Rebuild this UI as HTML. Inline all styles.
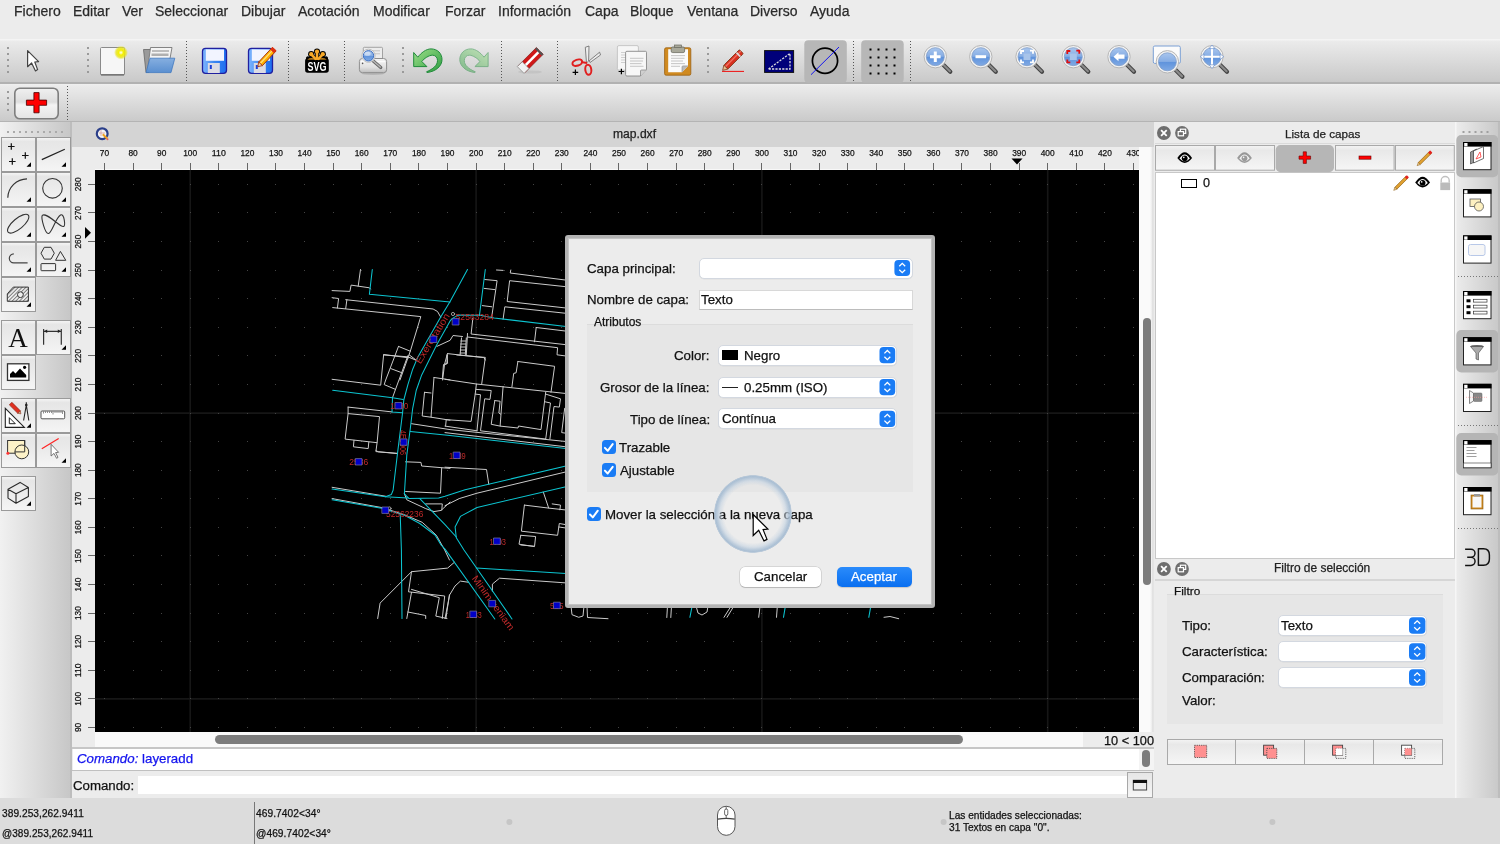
<!DOCTYPE html>
<html><head><meta charset="utf-8">
<style>
*{box-sizing:border-box;margin:0;padding:0}
html,body{width:1500px;height:844px;overflow:hidden;background:#ececec;font-family:"Liberation Sans",sans-serif;color:#222}
.a{position:absolute}
svg,.t{will-change:transform}
.t{-webkit-text-stroke:0.25px}
.t{position:absolute;white-space:nowrap;line-height:1}
.chk{width:14.3px;height:14px;border-radius:3.5px;background:#1a7cf5}
.cmb{background:#fff;border:1px solid #d3d8e0;border-radius:5px;box-shadow:0 .5px .5px rgba(0,0,0,.06)}
#menu .t{font-size:14px;color:#2a2a2a;top:4px}
</style></head><body>
<!-- MENU -->
<div id="menu" class="a" style="left:0;top:0;width:1500px;height:39px;background:#ececec">
<span class="t" style="left:14px">Fichero</span>
<span class="t" style="left:73px">Editar</span>
<span class="t" style="left:122px">Ver</span>
<span class="t" style="left:155px">Seleccionar</span>
<span class="t" style="left:241px">Dibujar</span>
<span class="t" style="left:298px">Acotación</span>
<span class="t" style="left:373px">Modificar</span>
<span class="t" style="left:445px">Forzar</span>
<span class="t" style="left:498px">Información</span>
<span class="t" style="left:585px">Capa</span>
<span class="t" style="left:630px">Bloque</span>
<span class="t" style="left:687px">Ventana</span>
<span class="t" style="left:750px">Diverso</span>
<span class="t" style="left:810px">Ayuda</span>
</div>
<!-- TOOLBAR 1 -->
<div id="tb1" class="a" style="left:0;top:39px;width:1500px;height:45px;background:linear-gradient(#f4f4f4 0,#f4f4f4 1px,#ebebeb 2px,#c9c9c9 43px,#b2b2b2 43px,#b2b2b2 45px)"></div>
<!-- TOOLBAR 2 -->
<div id="tb2" class="a" style="left:0;top:84px;width:1500px;height:38px;background:linear-gradient(#f0f0f0 0,#ebebeb 2px,#cacaca 37px,#b4b4b4 37.5px)"></div>
<!-- LEFT TOOLBOX -->
<div id="tbox" class="a" style="left:0;top:122px;width:70px;height:676px;background:linear-gradient(90deg,#f1f1f1,#c7c7c7)"></div>
<div class="a" style="left:70px;top:122px;width:2px;height:676px;background:#bdbdbd"></div>
<!-- DRAWING HEADER -->
<div class="a" style="left:72px;top:122px;width:1082px;height:25px;background:#d4d4d4"></div>
<div class="t" style="left:613px;top:128px;font-size:12.1px;color:#222">map.dxf</div>
<!-- RULERS -->
<div class="a" style="left:72px;top:147px;width:1067px;height:23px;background:#ececec"></div>
<div class="a" style="left:72px;top:170px;width:23px;height:578px;background:#ececec"></div>
<!-- CANVAS -->
<div id="canvas" class="a" style="left:95px;top:170px;width:1044px;height:562px;background:#000;overflow:hidden"></div>
<!-- V SCROLL -->
<div class="a" style="left:1139px;top:147px;width:15px;height:601px;background:linear-gradient(90deg,#fafafa 0,#fafafa 11px,#ececec 13px,#d8d8d8 14px,#f0f0f0 15px)"></div>
<div class="a" style="left:1143px;top:318px;width:8px;height:267px;border-radius:4px;background:#7c7c7c"></div>
<!-- H SCROLL -->
<div class="a" style="left:95px;top:732px;width:988px;height:15px;background:#f9f9f9"></div>
<div class="a" style="left:215px;top:735px;width:748px;height:9px;border-radius:5px;background:#7c7c7c"></div>
<div class="a" style="left:1083px;top:732px;width:71px;height:15px;background:#ececec"></div>
<div class="t" style="left:1103.5px;top:735px;font-size:12.75px;color:#111">10 &lt; 100</div>
<!-- COMMAND -->
<div class="a" style="left:72px;top:747px;width:1082px;height:2px;background:#c6c6c6"></div>
<div class="a" style="left:73px;top:749px;width:1081px;height:21px;background:#fff"></div>
<div class="a" style="left:72px;top:770px;width:1082px;height:1px;background:#c0c0c0"></div>
<div class="a" style="left:72px;top:771px;width:1082px;height:27px;background:#ececec"></div>
<div class="a" style="left:138px;top:775.7px;width:989px;height:18.5px;background:#fff"></div>
<div class="t" style="left:77px;top:752px;font-size:13.3px;color:#1414ee"><i>Comando:</i> layeradd</div>
<div class="t" style="left:73px;top:779px;font-size:13.25px;color:#111">Comando:</div>
<!-- STATUS -->
<div class="a" style="left:0;top:798px;width:1500px;height:46px;background:#dcdcdc"></div>
<!-- RIGHT PANEL -->
<div id="rp" class="a" style="left:1154px;top:122px;width:301px;height:676px;background:#ececec"></div>
<div class="a" style="left:1155px;top:172px;width:299.7px;height:387px;background:#fff;border:1px solid #c8c8c8"></div>
<!-- DOCK -->
<div id="dock" class="a" style="left:1455px;top:122px;width:45px;height:676px;background:linear-gradient(90deg,#f6f6f6 0,#f6f6f6 1px,#ebebeb 2px,#c9c9c9 43px)"></div>


<!-- STATUS DETAIL -->
<div class="t" style="left:2.4px;top:808.6px;font-size:10.15px;letter-spacing:.06px;color:#111">389.253,262.9411</div>
<div class="t" style="left:2.4px;top:828.6px;font-size:10px;letter-spacing:.06px;color:#111">@389.253,262.9411</div>
<div class="a" style="left:253.5px;top:802px;width:1px;height:42px;background:#777"></div>
<div class="t" style="left:256.3px;top:808.6px;font-size:10.2px;letter-spacing:.06px;color:#111">469.7402&lt;34°</div>
<div class="t" style="left:256.3px;top:828.6px;font-size:10.2px;letter-spacing:.06px;color:#111">@469.7402&lt;34°</div>
<div class="t" style="left:949.2px;top:811.2px;font-size:10.15px;color:#111">Las entidades seleccionadas:</div>
<div class="t" style="left:949.2px;top:822.6px;font-size:10.15px;color:#111">31 Textos en capa "0".</div>
<div class="a" style="left:1127.4px;top:772.4px;width:25.6px;height:25.3px;border:1px solid #a8a8a8;background:linear-gradient(#e6e6e6,#f6f6f6)"></div>
<div class="a" style="left:1139px;top:749px;width:14.5px;height:21px;background:#f4f4f4"></div>
<div class="a" style="left:1142px;top:750.2px;width:8px;height:16.5px;border-radius:4px;background:#7c7c7c"></div>
<svg class="a" style="left:0;top:0" width="1500" height="844" viewBox="0 0 1500 844">
<circle cx="509.4" cy="822" r="3" fill="#c6c6c6"/>
<circle cx="943.6" cy="822.1" r="3" fill="#c6c6c6"/>
<circle cx="1272.4" cy="822.1" r="3" fill="#c6c6c6"/>
<rect x="717.5" y="806.3" width="17.5" height="29" rx="8.7" fill="#fff" stroke="#444" stroke-width=".9"/>
<path d="M717.8,819.2 Q726.2,817.4 734.7,819.2" fill="none" stroke="#444" stroke-width="1.3"/>
<line x1="726.2" y1="806.5" x2="726.2" y2="818.3" stroke="#444" stroke-width=".8"/>
<rect x="724.6" y="809" width="3.2" height="6.5" rx="1.6" fill="#fff" stroke="#444" stroke-width=".8"/>
<rect x="1133.3" y="780.3" width="13.3" height="9.7" fill="#eee" stroke="#444" stroke-width="1"/>
<rect x="1133" y="780" width="14" height="3" fill="#111"/>
</svg>

<!-- RIGHT PANEL DETAIL -->
<div class="a" style="left:1139px;top:122px;width:15px;height:25px;background:#d4d4d4"></div>
<div class="a" style="left:1155px;top:143px;width:300px;height:1px;background:#dadada"></div>
<div class="t" style="left:1284.5px;top:127.5px;font-size:11.7px;color:#222">Lista de capas</div>
<div class="a" style="left:1155px;top:579px;width:300px;height:2px;background:#d6d6d6"></div>
<div class="t" style="left:1274.2px;top:563.3px;font-size:11.95px;color:#222">Filtro de selección</div>
<div class="a" style="left:1167px;top:594px;width:276px;height:130px;background:#e6e6e6;border-top:1px solid #dcdcdc"></div>
<div class="t" style="left:1174.4px;top:585.8px;font-size:11.8px;color:#111">Filtro</div>
<div class="t" style="left:1182px;top:618.5px;font-size:13.3px;color:#111">Tipo:</div>
<div class="t" style="left:1182px;top:644.5px;font-size:13.3px;color:#111">Característica:</div>
<div class="t" style="left:1182px;top:670.5px;font-size:13.3px;color:#111">Comparación:</div>
<div class="t" style="left:1182px;top:693.5px;font-size:13.3px;color:#111">Valor:</div>
<div class="a cmb" style="left:1278px;top:615px;width:149px;height:21px"></div>
<div class="a cmb" style="left:1278px;top:641px;width:149px;height:21px"></div>
<div class="a cmb" style="left:1278px;top:667px;width:149px;height:21px"></div>
<div class="t" style="left:1281px;top:618.5px;font-size:13.3px;color:#111">Texto</div>
<svg class="a" style="left:0;top:0;z-index:2" width="1500" height="844" viewBox="0 0 1500 844">
<defs>
<linearGradient id="lbtn" x1="0" y1="0" x2="0" y2="1"><stop offset="0" stop-color="#f4f4f4"/><stop offset=".2" stop-color="#e8e8e8"/><stop offset="1" stop-color="#f6f6f6"/></linearGradient>
<g id="eye"><path d="M-7.4,0.3 Q-3.5,-5.6 0,-5.6 Q3.5,-5.6 7.4,0.3 Q3.5,5.2 0,5.2 Q-3.5,5.2 -7.4,0.3 Z" fill="#000"/><path d="M-5.2,0.6 Q-2.5,-3.2 0,-3.2 Q2.5,-3.2 5.2,0.6 Q2.5,3.4 0,3.4 Q-2.5,3.4 -5.2,0.6 Z" fill="#fff"/><circle cx="0" cy=".5" r="2.9" fill="#000"/><circle cx="-.9" cy="-.4" r=".8" fill="#fff"/></g>
<g id="pen"><rect x="1.5" y="-1.4" width="16" height="2.8" fill="#e0a030" stroke="#8a5a10" stroke-width=".6"/><rect x="15.5" y="-1.4" width="3" height="2.8" fill="#e52020"/><path d="M1.5,-1.4 L-1.5,0 L1.5,1.4 Z" fill="#f0d090" stroke="#8a5a10" stroke-width=".5"/></g>
<g id="cls"><circle r="6.9" fill="#6e6e6e"/><path d="M-2.8,-2.8 L2.8,2.8 M2.8,-2.8 L-2.8,2.8" stroke="#fff" stroke-width="1.8"/></g>
<g id="flt"><circle r="6.9" fill="#6e6e6e"/><rect x="-1.6" y="-3.8" width="5.3" height="4.2" fill="none" stroke="#fff" stroke-width="1.2"/><rect x="-3.8" y="-1.4" width="5.3" height="4.2" fill="#6e6e6e" stroke="#fff" stroke-width="1.2"/></g>
</defs>
<use href="#cls" x="1163.9" y="133"/><use href="#flt" x="1182" y="133"/>
<use href="#cls" x="1163.9" y="569"/><use href="#flt" x="1182" y="569"/>
<!-- layer buttons -->
<rect x="1155.5" y="145.5" width="59" height="24.7" fill="url(#lbtn)" stroke="#a9a9a9"/>
<rect x="1215.5" y="145.5" width="59" height="24.7" fill="url(#lbtn)" stroke="#a9a9a9"/>
<rect x="1275.7" y="145" width="58.3" height="27.2" rx="5" fill="#b6b6b6"/>
<rect x="1335.5" y="145.5" width="58.6" height="24.7" fill="url(#lbtn)" stroke="#a9a9a9"/>
<rect x="1395.5" y="145.5" width="58.8" height="24.7" fill="url(#lbtn)" stroke="#a9a9a9"/>
<use href="#eye" x="1184.7" y="157.8"/>
<g opacity=".35"><use href="#eye" x="1244.5" y="157.8"/></g>
<path d="M1303.2,151.8 h3.2 v4.2 h4.2 v3.2 h-4.2 v4.2 h-3.2 v-4.2 h-4.2 v-3.2 h4.2 Z" fill="#f00" stroke="#600" stroke-width=".6"/>
<rect x="1359" y="156" width="12" height="3.2" fill="#f00" stroke="#600" stroke-width=".6"/>
<use href="#pen" transform="translate(1418.2,164.6) rotate(-45)"/>
<!-- layer row -->
<rect x="1181.5" y="179.5" width="15" height="8" fill="#fff" stroke="#000" stroke-width="1"/>
<use href="#pen" transform="translate(1394.8,189.3) rotate(-45)"/>
<use href="#eye" x="1422.6" y="182.3"/>
<path d="M1441.2,182.5 v-2 a4,4 0 0 1 8,0 v2" fill="none" stroke="#c0c0c0" stroke-width="1.4"/>
<rect x="1440.3" y="182.5" width="9.8" height="7.6" fill="#bbb"/>
<!-- filter combos steppers -->
<g id="stp"><rect x="1409" y="617.3" width="16.4" height="16.4" rx="4" fill="#1a7cf5"/><path d="M1414.2,623.8 l3,-3 l3,3 M1414.2,627.2 l3,3 l3,-3" fill="none" stroke="#fff" stroke-width="1.3"/></g>
<use href="#stp" y="26"/><use href="#stp" y="52"/>
<!-- filter buttons -->
<rect x="1167.5" y="739.5" width="68" height="25" fill="url(#lbtn)" stroke="#a9a9a9"/>
<rect x="1235.5" y="739.5" width="69" height="25" fill="url(#lbtn)" stroke="#a9a9a9"/>
<rect x="1304.5" y="739.5" width="69" height="25" fill="url(#lbtn)" stroke="#a9a9a9"/>
<rect x="1373.5" y="739.5" width="69" height="25" fill="url(#lbtn)" stroke="#a9a9a9"/>
<rect x="1194.5" y="745.3" width="12.2" height="12.2" fill="#ff9090" stroke="#444" stroke-width=".8" stroke-dasharray="1.2 1"/>
<rect x="1263.6" y="745.2" width="10" height="10" fill="#ff9090" stroke="#444" stroke-width=".9"/>
<rect x="1266.8" y="748.4" width="10" height="10" fill="#ff9090" stroke="#444" stroke-width=".8" stroke-dasharray="1.2 1"/>
<rect x="1332.6" y="745.2" width="10" height="10" fill="#ff9090" stroke="#444" stroke-width=".9"/>
<rect x="1335.8" y="748.4" width="10" height="10" fill="none" stroke="#444" stroke-width=".8" stroke-dasharray="1.2 1"/>
<rect x="1335.8" y="748.4" width="6.8" height="6.8" fill="#fff"/>
<rect x="1401.6" y="745.2" width="10" height="10" fill="#fff" stroke="#444" stroke-width=".9"/>
<rect x="1404.8" y="748.4" width="10" height="10" fill="none" stroke="#444" stroke-width=".8" stroke-dasharray="1.2 1"/>
<rect x="1404.8" y="748.4" width="6.8" height="6.8" fill="#ff9090"/>
<!-- header qcad icon -->
<circle cx="102.2" cy="133.7" r="5.4" fill="#f4f4f4" stroke="#2b3f8a" stroke-width="2.2"/>
<path d="M99,133 h6 M101,130 v6" stroke="#c88" stroke-width=".6"/>
<line x1="102.8" y1="134.2" x2="107.3" y2="138.8" stroke="#f0a020" stroke-width="2"/>
<circle cx="107.5" cy="139.2" r="1" fill="#e06060"/>
</svg>


<!-- DOCK ICONS -->
<div class="t" style="left:1203px;top:176.5px;font-size:12.6px;color:#111">0</div>
<svg class="a" style="left:1455px;top:0;z-index:2" width="45" height="844" viewBox="1455 0 45 844">
<defs>
<g id="win"><rect x="0.5" y="0.5" width="27.5" height="27.2" fill="#fff" stroke="#222" stroke-width="1"/><rect x="0" y="0" width="28.5" height="4.6" fill="#000"/><rect x="1.2" y="1" width="3.3" height="3.3" fill="#fff"/></g>
</defs>
<rect x="1455" y="122" width="1" height="676" fill="#f6f6f6"/>
<g fill="#a0a0a0"><rect x="1462.5" y="131" width="2" height="2"/><rect x="1468.5" y="131" width="2" height="2"/><rect x="1474.5" y="131" width="2" height="2"/><rect x="1480.5" y="131" width="2" height="2"/><rect x="1486.5" y="131" width="2" height="2"/></g>
<rect x="1456.3" y="135" width="42" height="42.2" rx="5" fill="#b5b5b5"/>
<rect x="1456.3" y="330" width="42" height="42.5" rx="5" fill="#b5b5b5"/>
<rect x="1456.3" y="433" width="42" height="42.5" rx="5" fill="#b5b5b5"/>
<g stroke="#777" stroke-width="1" stroke-dasharray="1 2"><line x1="1458" y1="276.5" x2="1499" y2="276.5"/><line x1="1458" y1="425.5" x2="1499" y2="425.5"/><line x1="1458" y1="528.5" x2="1499" y2="528.5"/></g>
<use href="#win" x="1463" y="142"/>
<use href="#win" x="1463" y="189.2"/>
<use href="#win" x="1463" y="235.4"/>
<use href="#win" x="1463" y="291"/>
<use href="#win" x="1463" y="337.2"/>
<use href="#win" x="1463" y="383.8"/>
<use href="#win" x="1463" y="440.1"/>
<use href="#win" x="1463" y="487"/>
<!-- layers icon -->
<path d="M1470.5,152 l6,-3 v12 l-6,3 Z" fill="#999" stroke="#333" stroke-width=".6"/>
<path d="M1473.5,151 l10,-4.5 v12 l-10,4.5 Z" fill="#fff" stroke="#333" stroke-width=".7"/>
<path d="M1476,159 l4,-7 l1,5 Z" fill="none" stroke="#f33" stroke-width=".8"/>
<!-- block icon -->
<rect x="1470" y="199" width="10.5" height="7.5" fill="#fdf0c0" stroke="#555" stroke-width=".8"/>
<circle cx="1479" cy="206.5" r="4.5" fill="#fdf0c0" stroke="#555" stroke-width=".8"/>
<!-- props icon -->
<rect x="1468.5" y="244.5" width="16.5" height="11" rx="2" fill="#f6f6f6" stroke="#b8c8e8" stroke-width="1"/>
<!-- list icon -->
<g fill="#000"><rect x="1466.5" y="299.3" width="4" height="3"/><rect x="1466.5" y="305.2" width="4" height="3"/><rect x="1466.5" y="311.2" width="4" height="3"/></g>
<g fill="#fff" stroke="#333" stroke-width=".7"><rect x="1473.5" y="299.3" width="13.5" height="2.8"/><rect x="1473.5" y="305.2" width="13.5" height="2.8"/><rect x="1473.5" y="311.2" width="13.5" height="2.8"/></g>
<!-- funnel -->
<ellipse cx="1477" cy="346.5" rx="6.5" ry="1.6" fill="#666"/>
<path d="M1470.5,346.5 L1476,353 L1476,359 L1478.5,360 L1478.5,353 L1483.5,346.5 Z" fill="#aaa" stroke="#444" stroke-width=".6"/>
<!-- screw -->
<path d="M1469.5,351.5 l4,2.5 v8 l-4,2.5 Z" transform="translate(0,39)" fill="#f4f4f4" stroke="#555" stroke-width=".7"/>
<rect x="1473.5" y="393" width="8.5" height="8.5" rx="1" fill="#888" stroke="#666" stroke-width=".5"/>
<line x1="1466" y1="397.3" x2="1487" y2="397.3" stroke="#f99" stroke-width=".6" stroke-dasharray="1 1"/>
<!-- command icon -->
<g fill="#888"><rect x="1466.5" y="447" width="10" height=".8"/><rect x="1466.5" y="450" width="8" height=".8"/><rect x="1466.5" y="453" width="10" height=".8"/><rect x="1466.5" y="456" width="10" height=".8"/></g>
<rect x="1463.5" y="463" width="27.5" height="4.7" fill="#fff" stroke="#333" stroke-width=".6"/>
<!-- clipboard -->
<rect x="1471" y="495" width="12" height="14" fill="#d08a20" stroke="#8a5a10" stroke-width=".6"/>
<rect x="1472.5" y="496.5" width="9" height="11" fill="#f8f8f8"/>
<rect x="1474" y="494" width="6" height="2.5" fill="#999"/>
<path d="M1465.1,549.3 H1471 A4,4 0 0 1 1471,557.3 H1467.2 M1471,557.3 A4.05,4.05 0 0 1 1471,565.4 H1465.1 M1478.4,548.7 V565.2 H1483.5 Q1489.4,565.2 1489.4,559 V555 Q1489.4,548.7 1483.5,548.7 Z" fill="none" stroke="#111" stroke-width="1.45" stroke-linejoin="round"/><rect x="1498" y="122" width="2" height="676" fill="#bdbdbd"/>
</svg>

<!-- DIALOG -->
<div id="dlg" class="a" style="z-index:10;left:565px;top:235px;width:370px;height:373px;background:#ececec;border:3px solid #b3b3b3;border-radius:3px;box-shadow:inset 0 0 0 1px #c4c4c4"></div>
<div class="a" style="z-index:11;left:0;top:0;width:1500px;height:844px">
<div class="t" style="left:587px;top:262px;font-size:13.3px;color:#111">Capa principal:</div>
<div class="a cmb" style="left:698.5px;top:257.5px;width:214px;height:21px"></div>
<div class="t" style="left:587px;top:293px;font-size:13.3px;color:#111">Nombre de capa:</div>
<div class="a" style="left:698.5px;top:290px;width:214px;height:19.5px;background:#fff;border:1px solid #d8d8d8;border-bottom-color:#bcbcbc"></div>
<div class="t" style="left:700.5px;top:293px;font-size:13.3px;color:#111">Texto</div>
<div class="a" style="left:586.8px;top:324px;width:326.2px;height:168px;background:#e6e6e6;border-top:1px solid #dcdcdc"></div>
<div class="t" style="left:594.4px;top:316px;font-size:12px;color:#111">Atributos</div>
<div class="t" style="left:673.5px;top:348.5px;font-size:13.3px;color:#111">Color:</div>
<div class="t" style="left:599.8px;top:380.5px;font-size:13.3px;color:#111">Grosor de la línea:</div>
<div class="t" style="left:630px;top:412.5px;font-size:13.3px;color:#111">Tipo de línea:</div>
<div class="a cmb" style="left:718px;top:344.5px;width:179px;height:21px"></div>
<div class="a cmb" style="left:718px;top:376.5px;width:179px;height:21px"></div>
<div class="a cmb" style="left:718px;top:408.3px;width:179px;height:21px"></div>
<div class="a" style="left:722px;top:350.3px;width:16px;height:9.4px;background:#000"></div>
<div class="t" style="left:744px;top:348.5px;font-size:13.3px;color:#111">Negro</div>
<div class="a" style="left:722px;top:386.5px;width:16px;height:1px;background:#222"></div>
<div class="t" style="left:744px;top:380.5px;font-size:13.3px;color:#111">0.25mm (ISO)</div>
<div class="t" style="left:721.5px;top:412px;font-size:13.3px;color:#111">Contínua</div>
<div class="a chk" style="left:601.7px;top:440.3px"></div>
<div class="a chk" style="left:601.7px;top:463px"></div>
<div class="a chk" style="left:586.8px;top:506.9px"></div>
<div class="t" style="left:619.4px;top:441px;font-size:13.3px;color:#111">Trazable</div>
<div class="t" style="left:620px;top:464px;font-size:13.3px;color:#111">Ajustable</div>
<div class="t" style="left:605px;top:508px;font-size:13.3px;color:#111">Mover la selección a la nueva capa</div>
<div class="a" style="left:739.8px;top:566.8px;width:81.3px;height:20.3px;background:#fff;border-radius:5px;box-shadow:0 0 0 .5px rgba(0,0,0,.18),0 1px 1px rgba(0,0,0,.15)"></div>
<div class="t" style="left:753.5px;top:570px;font-size:13.3px;color:#111">Cancelar</div>
<div class="a" style="left:836.8px;top:566.8px;width:75px;height:20.3px;background:linear-gradient(#2a8bfb,#0a6ff0);border-radius:5px;box-shadow:0 1px 1px rgba(0,0,0,.15)"></div>
<div class="t" style="left:851px;top:570px;font-size:13.3px;color:#fff">Aceptar</div>
<svg class="a" style="left:0;top:0" width="1500" height="844" viewBox="0 0 1500 844">
<defs><g id="dstp"><rect x="0" y="0" width="15.7" height="16.2" rx="4" fill="#1a7cf5"/><path d="M4.9,6.4 l2.95,-2.9 l2.95,2.9 M4.9,9.8 l2.95,2.9 l2.95,-2.9" fill="none" stroke="#fff" stroke-width="1.3"/></g>
<g id="tick"><path d="M3.2,7.6 L6,10.5 L11,3.8" fill="none" stroke="#fff" stroke-width="2" stroke-linecap="round" stroke-linejoin="round"/></g></defs>
<use href="#dstp" x="894.4" y="259.9"/>
<use href="#dstp" x="879.5" y="347"/>
<use href="#dstp" x="879.5" y="379"/>
<use href="#dstp" x="879.5" y="410.8"/>
<use href="#tick" x="601.7" y="440.3"/>
<use href="#tick" x="601.7" y="463"/>
<use href="#tick" x="586.8" y="506.9"/>
<radialGradient id="ring" cx="752.9" cy="514" r="39.2" gradientUnits="userSpaceOnUse"><stop offset="0" stop-color="#b0c4d8" stop-opacity="0"/><stop offset=".74" stop-color="#c4d2e0" stop-opacity="0"/><stop offset=".84" stop-color="#c4d3e2" stop-opacity=".55"/><stop offset=".9" stop-color="#b2c5d8" stop-opacity=".8"/><stop offset=".955" stop-color="#a6bcd2" stop-opacity=".95"/><stop offset=".985" stop-color="#a9bed3" stop-opacity=".7"/><stop offset="1" stop-color="#a9bed3" stop-opacity="0"/></radialGradient>
<circle cx="752.9" cy="514" r="39.2" fill="url(#ring)"/>
<path d="M753.2,514.5 L753.2,535.5 L758.7,530.2 L764,540.9 L767,539.4 L763.1,529.6 L767.9,529 Z" fill="#fff" stroke="#000" stroke-width="1.2" stroke-linejoin="miter"/>
</svg>
</div>


<!-- RULERS+GRID -->
<svg class="a" style="left:0;top:0" width="1500" height="844" viewBox="0 0 1500 844">
<defs><clipPath id="rulT"><rect x="95" y="147" width="1044" height="23"/></clipPath><clipPath id="rulL"><rect x="72" y="170" width="23" height="562"/></clipPath><clipPath id="cnv"><rect x="95" y="170" width="1044" height="562"/></clipPath></defs>
<line x1="95" y1="169.5" x2="1139" y2="169.5" stroke="#f8f8f8" stroke-width="1"/>
<g clip-path="url(#rulT)">
<line x1="104.5" y1="163" x2="104.5" y2="170" stroke="#666" stroke-width="1"/>
<text x="104.5" y="156" text-anchor="middle" font-family="Liberation Sans" font-size="9.4" fill="#111" stroke="#111" stroke-width="0.25" textLength="9.3" lengthAdjust="spacingAndGlyphs">70</text>
<line x1="133.5" y1="163" x2="133.5" y2="170" stroke="#666" stroke-width="1"/>
<text x="133.1" y="156" text-anchor="middle" font-family="Liberation Sans" font-size="9.4" fill="#111" stroke="#111" stroke-width="0.25" textLength="9.3" lengthAdjust="spacingAndGlyphs">80</text>
<line x1="161.5" y1="163" x2="161.5" y2="170" stroke="#666" stroke-width="1"/>
<text x="161.7" y="156" text-anchor="middle" font-family="Liberation Sans" font-size="9.4" fill="#111" stroke="#111" stroke-width="0.25" textLength="9.3" lengthAdjust="spacingAndGlyphs">90</text>
<line x1="190.5" y1="163" x2="190.5" y2="170" stroke="#666" stroke-width="1"/>
<text x="190.2" y="156" text-anchor="middle" font-family="Liberation Sans" font-size="9.4" fill="#111" stroke="#111" stroke-width="0.25" textLength="14.0" lengthAdjust="spacingAndGlyphs">100</text>
<line x1="218.5" y1="163" x2="218.5" y2="170" stroke="#666" stroke-width="1"/>
<text x="218.8" y="156" text-anchor="middle" font-family="Liberation Sans" font-size="9.4" fill="#111" stroke="#111" stroke-width="0.25" textLength="14.0" lengthAdjust="spacingAndGlyphs">110</text>
<line x1="247.5" y1="163" x2="247.5" y2="170" stroke="#666" stroke-width="1"/>
<text x="247.4" y="156" text-anchor="middle" font-family="Liberation Sans" font-size="9.4" fill="#111" stroke="#111" stroke-width="0.25" textLength="14.0" lengthAdjust="spacingAndGlyphs">120</text>
<line x1="275.5" y1="163" x2="275.5" y2="170" stroke="#666" stroke-width="1"/>
<text x="276.0" y="156" text-anchor="middle" font-family="Liberation Sans" font-size="9.4" fill="#111" stroke="#111" stroke-width="0.25" textLength="14.0" lengthAdjust="spacingAndGlyphs">130</text>
<line x1="304.5" y1="163" x2="304.5" y2="170" stroke="#666" stroke-width="1"/>
<text x="304.6" y="156" text-anchor="middle" font-family="Liberation Sans" font-size="9.4" fill="#111" stroke="#111" stroke-width="0.25" textLength="14.0" lengthAdjust="spacingAndGlyphs">140</text>
<line x1="333.5" y1="163" x2="333.5" y2="170" stroke="#666" stroke-width="1"/>
<text x="333.2" y="156" text-anchor="middle" font-family="Liberation Sans" font-size="9.4" fill="#111" stroke="#111" stroke-width="0.25" textLength="14.0" lengthAdjust="spacingAndGlyphs">150</text>
<line x1="361.5" y1="163" x2="361.5" y2="170" stroke="#666" stroke-width="1"/>
<text x="361.7" y="156" text-anchor="middle" font-family="Liberation Sans" font-size="9.4" fill="#111" stroke="#111" stroke-width="0.25" textLength="14.0" lengthAdjust="spacingAndGlyphs">160</text>
<line x1="390.5" y1="163" x2="390.5" y2="170" stroke="#666" stroke-width="1"/>
<text x="390.3" y="156" text-anchor="middle" font-family="Liberation Sans" font-size="9.4" fill="#111" stroke="#111" stroke-width="0.25" textLength="14.0" lengthAdjust="spacingAndGlyphs">170</text>
<line x1="418.5" y1="163" x2="418.5" y2="170" stroke="#666" stroke-width="1"/>
<text x="418.9" y="156" text-anchor="middle" font-family="Liberation Sans" font-size="9.4" fill="#111" stroke="#111" stroke-width="0.25" textLength="14.0" lengthAdjust="spacingAndGlyphs">180</text>
<line x1="447.5" y1="163" x2="447.5" y2="170" stroke="#666" stroke-width="1"/>
<text x="447.5" y="156" text-anchor="middle" font-family="Liberation Sans" font-size="9.4" fill="#111" stroke="#111" stroke-width="0.25" textLength="14.0" lengthAdjust="spacingAndGlyphs">190</text>
<line x1="476.5" y1="163" x2="476.5" y2="170" stroke="#666" stroke-width="1"/>
<text x="476.1" y="156" text-anchor="middle" font-family="Liberation Sans" font-size="9.4" fill="#111" stroke="#111" stroke-width="0.25" textLength="14.0" lengthAdjust="spacingAndGlyphs">200</text>
<line x1="504.5" y1="163" x2="504.5" y2="170" stroke="#666" stroke-width="1"/>
<text x="504.7" y="156" text-anchor="middle" font-family="Liberation Sans" font-size="9.4" fill="#111" stroke="#111" stroke-width="0.25" textLength="14.0" lengthAdjust="spacingAndGlyphs">210</text>
<line x1="533.5" y1="163" x2="533.5" y2="170" stroke="#666" stroke-width="1"/>
<text x="533.2" y="156" text-anchor="middle" font-family="Liberation Sans" font-size="9.4" fill="#111" stroke="#111" stroke-width="0.25" textLength="14.0" lengthAdjust="spacingAndGlyphs">220</text>
<line x1="561.5" y1="163" x2="561.5" y2="170" stroke="#666" stroke-width="1"/>
<text x="561.8" y="156" text-anchor="middle" font-family="Liberation Sans" font-size="9.4" fill="#111" stroke="#111" stroke-width="0.25" textLength="14.0" lengthAdjust="spacingAndGlyphs">230</text>
<line x1="590.5" y1="163" x2="590.5" y2="170" stroke="#666" stroke-width="1"/>
<text x="590.4" y="156" text-anchor="middle" font-family="Liberation Sans" font-size="9.4" fill="#111" stroke="#111" stroke-width="0.25" textLength="14.0" lengthAdjust="spacingAndGlyphs">240</text>
<line x1="618.5" y1="163" x2="618.5" y2="170" stroke="#666" stroke-width="1"/>
<text x="619.0" y="156" text-anchor="middle" font-family="Liberation Sans" font-size="9.4" fill="#111" stroke="#111" stroke-width="0.25" textLength="14.0" lengthAdjust="spacingAndGlyphs">250</text>
<line x1="647.5" y1="163" x2="647.5" y2="170" stroke="#666" stroke-width="1"/>
<text x="647.6" y="156" text-anchor="middle" font-family="Liberation Sans" font-size="9.4" fill="#111" stroke="#111" stroke-width="0.25" textLength="14.0" lengthAdjust="spacingAndGlyphs">260</text>
<line x1="676.5" y1="163" x2="676.5" y2="170" stroke="#666" stroke-width="1"/>
<text x="676.2" y="156" text-anchor="middle" font-family="Liberation Sans" font-size="9.4" fill="#111" stroke="#111" stroke-width="0.25" textLength="14.0" lengthAdjust="spacingAndGlyphs">270</text>
<line x1="704.5" y1="163" x2="704.5" y2="170" stroke="#666" stroke-width="1"/>
<text x="704.7" y="156" text-anchor="middle" font-family="Liberation Sans" font-size="9.4" fill="#111" stroke="#111" stroke-width="0.25" textLength="14.0" lengthAdjust="spacingAndGlyphs">280</text>
<line x1="733.5" y1="163" x2="733.5" y2="170" stroke="#666" stroke-width="1"/>
<text x="733.3" y="156" text-anchor="middle" font-family="Liberation Sans" font-size="9.4" fill="#111" stroke="#111" stroke-width="0.25" textLength="14.0" lengthAdjust="spacingAndGlyphs">290</text>
<line x1="761.5" y1="163" x2="761.5" y2="170" stroke="#666" stroke-width="1"/>
<text x="761.9" y="156" text-anchor="middle" font-family="Liberation Sans" font-size="9.4" fill="#111" stroke="#111" stroke-width="0.25" textLength="14.0" lengthAdjust="spacingAndGlyphs">300</text>
<line x1="790.5" y1="163" x2="790.5" y2="170" stroke="#666" stroke-width="1"/>
<text x="790.5" y="156" text-anchor="middle" font-family="Liberation Sans" font-size="9.4" fill="#111" stroke="#111" stroke-width="0.25" textLength="14.0" lengthAdjust="spacingAndGlyphs">310</text>
<line x1="819.5" y1="163" x2="819.5" y2="170" stroke="#666" stroke-width="1"/>
<text x="819.1" y="156" text-anchor="middle" font-family="Liberation Sans" font-size="9.4" fill="#111" stroke="#111" stroke-width="0.25" textLength="14.0" lengthAdjust="spacingAndGlyphs">320</text>
<line x1="847.5" y1="163" x2="847.5" y2="170" stroke="#666" stroke-width="1"/>
<text x="847.7" y="156" text-anchor="middle" font-family="Liberation Sans" font-size="9.4" fill="#111" stroke="#111" stroke-width="0.25" textLength="14.0" lengthAdjust="spacingAndGlyphs">330</text>
<line x1="876.5" y1="163" x2="876.5" y2="170" stroke="#666" stroke-width="1"/>
<text x="876.2" y="156" text-anchor="middle" font-family="Liberation Sans" font-size="9.4" fill="#111" stroke="#111" stroke-width="0.25" textLength="14.0" lengthAdjust="spacingAndGlyphs">340</text>
<line x1="904.5" y1="163" x2="904.5" y2="170" stroke="#666" stroke-width="1"/>
<text x="904.8" y="156" text-anchor="middle" font-family="Liberation Sans" font-size="9.4" fill="#111" stroke="#111" stroke-width="0.25" textLength="14.0" lengthAdjust="spacingAndGlyphs">350</text>
<line x1="933.5" y1="163" x2="933.5" y2="170" stroke="#666" stroke-width="1"/>
<text x="933.4" y="156" text-anchor="middle" font-family="Liberation Sans" font-size="9.4" fill="#111" stroke="#111" stroke-width="0.25" textLength="14.0" lengthAdjust="spacingAndGlyphs">360</text>
<line x1="961.5" y1="163" x2="961.5" y2="170" stroke="#666" stroke-width="1"/>
<text x="962.0" y="156" text-anchor="middle" font-family="Liberation Sans" font-size="9.4" fill="#111" stroke="#111" stroke-width="0.25" textLength="14.0" lengthAdjust="spacingAndGlyphs">370</text>
<line x1="990.5" y1="163" x2="990.5" y2="170" stroke="#666" stroke-width="1"/>
<text x="990.6" y="156" text-anchor="middle" font-family="Liberation Sans" font-size="9.4" fill="#111" stroke="#111" stroke-width="0.25" textLength="14.0" lengthAdjust="spacingAndGlyphs">380</text>
<line x1="1019.5" y1="163" x2="1019.5" y2="170" stroke="#666" stroke-width="1"/>
<text x="1019.2" y="156" text-anchor="middle" font-family="Liberation Sans" font-size="9.4" fill="#111" stroke="#111" stroke-width="0.25" textLength="14.0" lengthAdjust="spacingAndGlyphs">390</text>
<line x1="1047.5" y1="163" x2="1047.5" y2="170" stroke="#666" stroke-width="1"/>
<text x="1047.7" y="156" text-anchor="middle" font-family="Liberation Sans" font-size="9.4" fill="#111" stroke="#111" stroke-width="0.25" textLength="14.0" lengthAdjust="spacingAndGlyphs">400</text>
<line x1="1076.5" y1="163" x2="1076.5" y2="170" stroke="#666" stroke-width="1"/>
<text x="1076.3" y="156" text-anchor="middle" font-family="Liberation Sans" font-size="9.4" fill="#111" stroke="#111" stroke-width="0.25" textLength="14.0" lengthAdjust="spacingAndGlyphs">410</text>
<line x1="1104.5" y1="163" x2="1104.5" y2="170" stroke="#666" stroke-width="1"/>
<text x="1104.9" y="156" text-anchor="middle" font-family="Liberation Sans" font-size="9.4" fill="#111" stroke="#111" stroke-width="0.25" textLength="14.0" lengthAdjust="spacingAndGlyphs">420</text>
<line x1="1133.5" y1="163" x2="1133.5" y2="170" stroke="#666" stroke-width="1"/>
<text x="1133.5" y="156" text-anchor="middle" font-family="Liberation Sans" font-size="9.4" fill="#111" stroke="#111" stroke-width="0.25" textLength="14.0" lengthAdjust="spacingAndGlyphs">430</text>
<path d="M1011.5,158.5 L1022.5,158.5 L1017,164.5 Z" fill="#000"/>
</g>
<g clip-path="url(#rulL)">
<line x1="88" y1="727.5" x2="95" y2="727.5" stroke="#666" stroke-width="1"/>
<text x="0" y="0" transform="translate(81.3,727.5) rotate(-90)" text-anchor="middle" font-family="Liberation Sans" font-size="9.4" fill="#111" stroke="#111" stroke-width="0.25" textLength="9.2" lengthAdjust="spacingAndGlyphs">90</text>
<line x1="88" y1="698.5" x2="95" y2="698.5" stroke="#666" stroke-width="1"/>
<text x="0" y="0" transform="translate(81.3,698.9) rotate(-90)" text-anchor="middle" font-family="Liberation Sans" font-size="9.4" fill="#111" stroke="#111" stroke-width="0.25" textLength="13.8" lengthAdjust="spacingAndGlyphs">100</text>
<line x1="88" y1="670.5" x2="95" y2="670.5" stroke="#666" stroke-width="1"/>
<text x="0" y="0" transform="translate(81.3,670.3) rotate(-90)" text-anchor="middle" font-family="Liberation Sans" font-size="9.4" fill="#111" stroke="#111" stroke-width="0.25" textLength="13.8" lengthAdjust="spacingAndGlyphs">110</text>
<line x1="88" y1="641.5" x2="95" y2="641.5" stroke="#666" stroke-width="1"/>
<text x="0" y="0" transform="translate(81.3,641.7) rotate(-90)" text-anchor="middle" font-family="Liberation Sans" font-size="9.4" fill="#111" stroke="#111" stroke-width="0.25" textLength="13.8" lengthAdjust="spacingAndGlyphs">120</text>
<line x1="88" y1="613.5" x2="95" y2="613.5" stroke="#666" stroke-width="1"/>
<text x="0" y="0" transform="translate(81.3,613.1) rotate(-90)" text-anchor="middle" font-family="Liberation Sans" font-size="9.4" fill="#111" stroke="#111" stroke-width="0.25" textLength="13.8" lengthAdjust="spacingAndGlyphs">130</text>
<line x1="88" y1="584.5" x2="95" y2="584.5" stroke="#666" stroke-width="1"/>
<text x="0" y="0" transform="translate(81.3,584.6) rotate(-90)" text-anchor="middle" font-family="Liberation Sans" font-size="9.4" fill="#111" stroke="#111" stroke-width="0.25" textLength="13.8" lengthAdjust="spacingAndGlyphs">140</text>
<line x1="88" y1="555.5" x2="95" y2="555.5" stroke="#666" stroke-width="1"/>
<text x="0" y="0" transform="translate(81.3,556.0) rotate(-90)" text-anchor="middle" font-family="Liberation Sans" font-size="9.4" fill="#111" stroke="#111" stroke-width="0.25" textLength="13.8" lengthAdjust="spacingAndGlyphs">150</text>
<line x1="88" y1="527.5" x2="95" y2="527.5" stroke="#666" stroke-width="1"/>
<text x="0" y="0" transform="translate(81.3,527.4) rotate(-90)" text-anchor="middle" font-family="Liberation Sans" font-size="9.4" fill="#111" stroke="#111" stroke-width="0.25" textLength="13.8" lengthAdjust="spacingAndGlyphs">160</text>
<line x1="88" y1="498.5" x2="95" y2="498.5" stroke="#666" stroke-width="1"/>
<text x="0" y="0" transform="translate(81.3,498.8) rotate(-90)" text-anchor="middle" font-family="Liberation Sans" font-size="9.4" fill="#111" stroke="#111" stroke-width="0.25" textLength="13.8" lengthAdjust="spacingAndGlyphs">170</text>
<line x1="88" y1="470.5" x2="95" y2="470.5" stroke="#666" stroke-width="1"/>
<text x="0" y="0" transform="translate(81.3,470.2) rotate(-90)" text-anchor="middle" font-family="Liberation Sans" font-size="9.4" fill="#111" stroke="#111" stroke-width="0.25" textLength="13.8" lengthAdjust="spacingAndGlyphs">180</text>
<line x1="88" y1="441.5" x2="95" y2="441.5" stroke="#666" stroke-width="1"/>
<text x="0" y="0" transform="translate(81.3,441.6) rotate(-90)" text-anchor="middle" font-family="Liberation Sans" font-size="9.4" fill="#111" stroke="#111" stroke-width="0.25" textLength="13.8" lengthAdjust="spacingAndGlyphs">190</text>
<line x1="88" y1="413.5" x2="95" y2="413.5" stroke="#666" stroke-width="1"/>
<text x="0" y="0" transform="translate(81.3,413.1) rotate(-90)" text-anchor="middle" font-family="Liberation Sans" font-size="9.4" fill="#111" stroke="#111" stroke-width="0.25" textLength="13.8" lengthAdjust="spacingAndGlyphs">200</text>
<line x1="88" y1="384.5" x2="95" y2="384.5" stroke="#666" stroke-width="1"/>
<text x="0" y="0" transform="translate(81.3,384.5) rotate(-90)" text-anchor="middle" font-family="Liberation Sans" font-size="9.4" fill="#111" stroke="#111" stroke-width="0.25" textLength="13.8" lengthAdjust="spacingAndGlyphs">210</text>
<line x1="88" y1="355.5" x2="95" y2="355.5" stroke="#666" stroke-width="1"/>
<text x="0" y="0" transform="translate(81.3,355.9) rotate(-90)" text-anchor="middle" font-family="Liberation Sans" font-size="9.4" fill="#111" stroke="#111" stroke-width="0.25" textLength="13.8" lengthAdjust="spacingAndGlyphs">220</text>
<line x1="88" y1="327.5" x2="95" y2="327.5" stroke="#666" stroke-width="1"/>
<text x="0" y="0" transform="translate(81.3,327.3) rotate(-90)" text-anchor="middle" font-family="Liberation Sans" font-size="9.4" fill="#111" stroke="#111" stroke-width="0.25" textLength="13.8" lengthAdjust="spacingAndGlyphs">230</text>
<line x1="88" y1="298.5" x2="95" y2="298.5" stroke="#666" stroke-width="1"/>
<text x="0" y="0" transform="translate(81.3,298.7) rotate(-90)" text-anchor="middle" font-family="Liberation Sans" font-size="9.4" fill="#111" stroke="#111" stroke-width="0.25" textLength="13.8" lengthAdjust="spacingAndGlyphs">240</text>
<line x1="88" y1="270.5" x2="95" y2="270.5" stroke="#666" stroke-width="1"/>
<text x="0" y="0" transform="translate(81.3,270.1) rotate(-90)" text-anchor="middle" font-family="Liberation Sans" font-size="9.4" fill="#111" stroke="#111" stroke-width="0.25" textLength="13.8" lengthAdjust="spacingAndGlyphs">250</text>
<line x1="88" y1="241.5" x2="95" y2="241.5" stroke="#666" stroke-width="1"/>
<text x="0" y="0" transform="translate(81.3,241.6) rotate(-90)" text-anchor="middle" font-family="Liberation Sans" font-size="9.4" fill="#111" stroke="#111" stroke-width="0.25" textLength="13.8" lengthAdjust="spacingAndGlyphs">260</text>
<line x1="88" y1="212.5" x2="95" y2="212.5" stroke="#666" stroke-width="1"/>
<text x="0" y="0" transform="translate(81.3,213.0) rotate(-90)" text-anchor="middle" font-family="Liberation Sans" font-size="9.4" fill="#111" stroke="#111" stroke-width="0.25" textLength="13.8" lengthAdjust="spacingAndGlyphs">270</text>
<line x1="88" y1="184.5" x2="95" y2="184.5" stroke="#666" stroke-width="1"/>
<text x="0" y="0" transform="translate(81.3,184.4) rotate(-90)" text-anchor="middle" font-family="Liberation Sans" font-size="9.4" fill="#111" stroke="#111" stroke-width="0.25" textLength="13.8" lengthAdjust="spacingAndGlyphs">280</text>
<path d="M85,226.9 L85,238.7 L91,232.8 Z" fill="#000"/>
</g>
<g clip-path="url(#cnv)">
<line x1="190.2" y1="170" x2="190.2" y2="732" stroke="#161616" stroke-width="1.6"/>
<line x1="476.1" y1="170" x2="476.1" y2="732" stroke="#161616" stroke-width="1.6"/>
<line x1="761.9" y1="170" x2="761.9" y2="732" stroke="#161616" stroke-width="1.6"/>
<line x1="1047.7" y1="170" x2="1047.7" y2="732" stroke="#161616" stroke-width="1.6"/>
<line x1="95" y1="698.9" x2="1139" y2="698.9" stroke="#161616" stroke-width="1.6"/>
<line x1="95" y1="413.1" x2="1139" y2="413.1" stroke="#161616" stroke-width="1.6"/>
<path d="M104,727h1v1h-1zM104,698h1v1h-1zM104,670h1v1h-1zM104,641h1v1h-1zM104,613h1v1h-1zM104,584h1v1h-1zM104,555h1v1h-1zM104,527h1v1h-1zM104,498h1v1h-1zM104,470h1v1h-1zM104,441h1v1h-1zM104,413h1v1h-1zM104,384h1v1h-1zM104,355h1v1h-1zM104,327h1v1h-1zM104,298h1v1h-1zM104,270h1v1h-1zM104,241h1v1h-1zM104,212h1v1h-1zM104,184h1v1h-1zM133,727h1v1h-1zM133,698h1v1h-1zM133,670h1v1h-1zM133,641h1v1h-1zM133,613h1v1h-1zM133,584h1v1h-1zM133,555h1v1h-1zM133,527h1v1h-1zM133,498h1v1h-1zM133,470h1v1h-1zM133,441h1v1h-1zM133,413h1v1h-1zM133,384h1v1h-1zM133,355h1v1h-1zM133,327h1v1h-1zM133,298h1v1h-1zM133,270h1v1h-1zM133,241h1v1h-1zM133,212h1v1h-1zM133,184h1v1h-1zM161,727h1v1h-1zM161,698h1v1h-1zM161,670h1v1h-1zM161,641h1v1h-1zM161,613h1v1h-1zM161,584h1v1h-1zM161,555h1v1h-1zM161,527h1v1h-1zM161,498h1v1h-1zM161,470h1v1h-1zM161,441h1v1h-1zM161,413h1v1h-1zM161,384h1v1h-1zM161,355h1v1h-1zM161,327h1v1h-1zM161,298h1v1h-1zM161,270h1v1h-1zM161,241h1v1h-1zM161,212h1v1h-1zM161,184h1v1h-1zM190,727h1v1h-1zM190,698h1v1h-1zM190,670h1v1h-1zM190,641h1v1h-1zM190,613h1v1h-1zM190,584h1v1h-1zM190,555h1v1h-1zM190,527h1v1h-1zM190,498h1v1h-1zM190,470h1v1h-1zM190,441h1v1h-1zM190,413h1v1h-1zM190,384h1v1h-1zM190,355h1v1h-1zM190,327h1v1h-1zM190,298h1v1h-1zM190,270h1v1h-1zM190,241h1v1h-1zM190,212h1v1h-1zM190,184h1v1h-1zM218,727h1v1h-1zM218,698h1v1h-1zM218,670h1v1h-1zM218,641h1v1h-1zM218,613h1v1h-1zM218,584h1v1h-1zM218,555h1v1h-1zM218,527h1v1h-1zM218,498h1v1h-1zM218,470h1v1h-1zM218,441h1v1h-1zM218,413h1v1h-1zM218,384h1v1h-1zM218,355h1v1h-1zM218,327h1v1h-1zM218,298h1v1h-1zM218,270h1v1h-1zM218,241h1v1h-1zM218,212h1v1h-1zM218,184h1v1h-1zM247,727h1v1h-1zM247,698h1v1h-1zM247,670h1v1h-1zM247,641h1v1h-1zM247,613h1v1h-1zM247,584h1v1h-1zM247,555h1v1h-1zM247,527h1v1h-1zM247,498h1v1h-1zM247,470h1v1h-1zM247,441h1v1h-1zM247,413h1v1h-1zM247,384h1v1h-1zM247,355h1v1h-1zM247,327h1v1h-1zM247,298h1v1h-1zM247,270h1v1h-1zM247,241h1v1h-1zM247,212h1v1h-1zM247,184h1v1h-1zM275,727h1v1h-1zM275,698h1v1h-1zM275,670h1v1h-1zM275,641h1v1h-1zM275,613h1v1h-1zM275,584h1v1h-1zM275,555h1v1h-1zM275,527h1v1h-1zM275,498h1v1h-1zM275,470h1v1h-1zM275,441h1v1h-1zM275,413h1v1h-1zM275,384h1v1h-1zM275,355h1v1h-1zM275,327h1v1h-1zM275,298h1v1h-1zM275,270h1v1h-1zM275,241h1v1h-1zM275,212h1v1h-1zM275,184h1v1h-1zM304,727h1v1h-1zM304,698h1v1h-1zM304,670h1v1h-1zM304,641h1v1h-1zM304,613h1v1h-1zM304,584h1v1h-1zM304,555h1v1h-1zM304,527h1v1h-1zM304,498h1v1h-1zM304,470h1v1h-1zM304,441h1v1h-1zM304,413h1v1h-1zM304,384h1v1h-1zM304,355h1v1h-1zM304,327h1v1h-1zM304,298h1v1h-1zM304,270h1v1h-1zM304,241h1v1h-1zM304,212h1v1h-1zM304,184h1v1h-1zM333,727h1v1h-1zM333,698h1v1h-1zM333,670h1v1h-1zM333,641h1v1h-1zM333,613h1v1h-1zM333,584h1v1h-1zM333,555h1v1h-1zM333,527h1v1h-1zM333,498h1v1h-1zM333,470h1v1h-1zM333,441h1v1h-1zM333,413h1v1h-1zM333,384h1v1h-1zM333,355h1v1h-1zM333,327h1v1h-1zM333,298h1v1h-1zM333,270h1v1h-1zM333,241h1v1h-1zM333,212h1v1h-1zM333,184h1v1h-1zM361,727h1v1h-1zM361,698h1v1h-1zM361,670h1v1h-1zM361,641h1v1h-1zM361,613h1v1h-1zM361,584h1v1h-1zM361,555h1v1h-1zM361,527h1v1h-1zM361,498h1v1h-1zM361,470h1v1h-1zM361,441h1v1h-1zM361,413h1v1h-1zM361,384h1v1h-1zM361,355h1v1h-1zM361,327h1v1h-1zM361,298h1v1h-1zM361,270h1v1h-1zM361,241h1v1h-1zM361,212h1v1h-1zM361,184h1v1h-1zM390,727h1v1h-1zM390,698h1v1h-1zM390,670h1v1h-1zM390,641h1v1h-1zM390,613h1v1h-1zM390,584h1v1h-1zM390,555h1v1h-1zM390,527h1v1h-1zM390,498h1v1h-1zM390,470h1v1h-1zM390,441h1v1h-1zM390,413h1v1h-1zM390,384h1v1h-1zM390,355h1v1h-1zM390,327h1v1h-1zM390,298h1v1h-1zM390,270h1v1h-1zM390,241h1v1h-1zM390,212h1v1h-1zM390,184h1v1h-1zM418,727h1v1h-1zM418,698h1v1h-1zM418,670h1v1h-1zM418,641h1v1h-1zM418,613h1v1h-1zM418,584h1v1h-1zM418,555h1v1h-1zM418,527h1v1h-1zM418,498h1v1h-1zM418,470h1v1h-1zM418,441h1v1h-1zM418,413h1v1h-1zM418,384h1v1h-1zM418,355h1v1h-1zM418,327h1v1h-1zM418,298h1v1h-1zM418,270h1v1h-1zM418,241h1v1h-1zM418,212h1v1h-1zM418,184h1v1h-1zM447,727h1v1h-1zM447,698h1v1h-1zM447,670h1v1h-1zM447,641h1v1h-1zM447,613h1v1h-1zM447,584h1v1h-1zM447,555h1v1h-1zM447,527h1v1h-1zM447,498h1v1h-1zM447,470h1v1h-1zM447,441h1v1h-1zM447,413h1v1h-1zM447,384h1v1h-1zM447,355h1v1h-1zM447,327h1v1h-1zM447,298h1v1h-1zM447,270h1v1h-1zM447,241h1v1h-1zM447,212h1v1h-1zM447,184h1v1h-1zM476,727h1v1h-1zM476,698h1v1h-1zM476,670h1v1h-1zM476,641h1v1h-1zM476,613h1v1h-1zM476,584h1v1h-1zM476,555h1v1h-1zM476,527h1v1h-1zM476,498h1v1h-1zM476,470h1v1h-1zM476,441h1v1h-1zM476,413h1v1h-1zM476,384h1v1h-1zM476,355h1v1h-1zM476,327h1v1h-1zM476,298h1v1h-1zM476,270h1v1h-1zM476,241h1v1h-1zM476,212h1v1h-1zM476,184h1v1h-1zM504,727h1v1h-1zM504,698h1v1h-1zM504,670h1v1h-1zM504,641h1v1h-1zM504,613h1v1h-1zM504,584h1v1h-1zM504,555h1v1h-1zM504,527h1v1h-1zM504,498h1v1h-1zM504,470h1v1h-1zM504,441h1v1h-1zM504,413h1v1h-1zM504,384h1v1h-1zM504,355h1v1h-1zM504,327h1v1h-1zM504,298h1v1h-1zM504,270h1v1h-1zM504,241h1v1h-1zM504,212h1v1h-1zM504,184h1v1h-1zM533,727h1v1h-1zM533,698h1v1h-1zM533,670h1v1h-1zM533,641h1v1h-1zM533,613h1v1h-1zM533,584h1v1h-1zM533,555h1v1h-1zM533,527h1v1h-1zM533,498h1v1h-1zM533,470h1v1h-1zM533,441h1v1h-1zM533,413h1v1h-1zM533,384h1v1h-1zM533,355h1v1h-1zM533,327h1v1h-1zM533,298h1v1h-1zM533,270h1v1h-1zM533,241h1v1h-1zM533,212h1v1h-1zM533,184h1v1h-1zM561,727h1v1h-1zM561,698h1v1h-1zM561,670h1v1h-1zM561,641h1v1h-1zM561,613h1v1h-1zM561,584h1v1h-1zM561,555h1v1h-1zM561,527h1v1h-1zM561,498h1v1h-1zM561,470h1v1h-1zM561,441h1v1h-1zM561,413h1v1h-1zM561,384h1v1h-1zM561,355h1v1h-1zM561,327h1v1h-1zM561,298h1v1h-1zM561,270h1v1h-1zM561,241h1v1h-1zM561,212h1v1h-1zM561,184h1v1h-1zM590,727h1v1h-1zM590,698h1v1h-1zM590,670h1v1h-1zM590,641h1v1h-1zM590,613h1v1h-1zM590,584h1v1h-1zM590,555h1v1h-1zM590,527h1v1h-1zM590,498h1v1h-1zM590,470h1v1h-1zM590,441h1v1h-1zM590,413h1v1h-1zM590,384h1v1h-1zM590,355h1v1h-1zM590,327h1v1h-1zM590,298h1v1h-1zM590,270h1v1h-1zM590,241h1v1h-1zM590,212h1v1h-1zM590,184h1v1h-1zM618,727h1v1h-1zM618,698h1v1h-1zM618,670h1v1h-1zM618,641h1v1h-1zM618,613h1v1h-1zM618,584h1v1h-1zM618,555h1v1h-1zM618,527h1v1h-1zM618,498h1v1h-1zM618,470h1v1h-1zM618,441h1v1h-1zM618,413h1v1h-1zM618,384h1v1h-1zM618,355h1v1h-1zM618,327h1v1h-1zM618,298h1v1h-1zM618,270h1v1h-1zM618,241h1v1h-1zM618,212h1v1h-1zM618,184h1v1h-1zM647,727h1v1h-1zM647,698h1v1h-1zM647,670h1v1h-1zM647,641h1v1h-1zM647,613h1v1h-1zM647,584h1v1h-1zM647,555h1v1h-1zM647,527h1v1h-1zM647,498h1v1h-1zM647,470h1v1h-1zM647,441h1v1h-1zM647,413h1v1h-1zM647,384h1v1h-1zM647,355h1v1h-1zM647,327h1v1h-1zM647,298h1v1h-1zM647,270h1v1h-1zM647,241h1v1h-1zM647,212h1v1h-1zM647,184h1v1h-1zM676,727h1v1h-1zM676,698h1v1h-1zM676,670h1v1h-1zM676,641h1v1h-1zM676,613h1v1h-1zM676,584h1v1h-1zM676,555h1v1h-1zM676,527h1v1h-1zM676,498h1v1h-1zM676,470h1v1h-1zM676,441h1v1h-1zM676,413h1v1h-1zM676,384h1v1h-1zM676,355h1v1h-1zM676,327h1v1h-1zM676,298h1v1h-1zM676,270h1v1h-1zM676,241h1v1h-1zM676,212h1v1h-1zM676,184h1v1h-1zM704,727h1v1h-1zM704,698h1v1h-1zM704,670h1v1h-1zM704,641h1v1h-1zM704,613h1v1h-1zM704,584h1v1h-1zM704,555h1v1h-1zM704,527h1v1h-1zM704,498h1v1h-1zM704,470h1v1h-1zM704,441h1v1h-1zM704,413h1v1h-1zM704,384h1v1h-1zM704,355h1v1h-1zM704,327h1v1h-1zM704,298h1v1h-1zM704,270h1v1h-1zM704,241h1v1h-1zM704,212h1v1h-1zM704,184h1v1h-1zM733,727h1v1h-1zM733,698h1v1h-1zM733,670h1v1h-1zM733,641h1v1h-1zM733,613h1v1h-1zM733,584h1v1h-1zM733,555h1v1h-1zM733,527h1v1h-1zM733,498h1v1h-1zM733,470h1v1h-1zM733,441h1v1h-1zM733,413h1v1h-1zM733,384h1v1h-1zM733,355h1v1h-1zM733,327h1v1h-1zM733,298h1v1h-1zM733,270h1v1h-1zM733,241h1v1h-1zM733,212h1v1h-1zM733,184h1v1h-1zM761,727h1v1h-1zM761,698h1v1h-1zM761,670h1v1h-1zM761,641h1v1h-1zM761,613h1v1h-1zM761,584h1v1h-1zM761,555h1v1h-1zM761,527h1v1h-1zM761,498h1v1h-1zM761,470h1v1h-1zM761,441h1v1h-1zM761,413h1v1h-1zM761,384h1v1h-1zM761,355h1v1h-1zM761,327h1v1h-1zM761,298h1v1h-1zM761,270h1v1h-1zM761,241h1v1h-1zM761,212h1v1h-1zM761,184h1v1h-1zM790,727h1v1h-1zM790,698h1v1h-1zM790,670h1v1h-1zM790,641h1v1h-1zM790,613h1v1h-1zM790,584h1v1h-1zM790,555h1v1h-1zM790,527h1v1h-1zM790,498h1v1h-1zM790,470h1v1h-1zM790,441h1v1h-1zM790,413h1v1h-1zM790,384h1v1h-1zM790,355h1v1h-1zM790,327h1v1h-1zM790,298h1v1h-1zM790,270h1v1h-1zM790,241h1v1h-1zM790,212h1v1h-1zM790,184h1v1h-1zM819,727h1v1h-1zM819,698h1v1h-1zM819,670h1v1h-1zM819,641h1v1h-1zM819,613h1v1h-1zM819,584h1v1h-1zM819,555h1v1h-1zM819,527h1v1h-1zM819,498h1v1h-1zM819,470h1v1h-1zM819,441h1v1h-1zM819,413h1v1h-1zM819,384h1v1h-1zM819,355h1v1h-1zM819,327h1v1h-1zM819,298h1v1h-1zM819,270h1v1h-1zM819,241h1v1h-1zM819,212h1v1h-1zM819,184h1v1h-1zM847,727h1v1h-1zM847,698h1v1h-1zM847,670h1v1h-1zM847,641h1v1h-1zM847,613h1v1h-1zM847,584h1v1h-1zM847,555h1v1h-1zM847,527h1v1h-1zM847,498h1v1h-1zM847,470h1v1h-1zM847,441h1v1h-1zM847,413h1v1h-1zM847,384h1v1h-1zM847,355h1v1h-1zM847,327h1v1h-1zM847,298h1v1h-1zM847,270h1v1h-1zM847,241h1v1h-1zM847,212h1v1h-1zM847,184h1v1h-1zM876,727h1v1h-1zM876,698h1v1h-1zM876,670h1v1h-1zM876,641h1v1h-1zM876,613h1v1h-1zM876,584h1v1h-1zM876,555h1v1h-1zM876,527h1v1h-1zM876,498h1v1h-1zM876,470h1v1h-1zM876,441h1v1h-1zM876,413h1v1h-1zM876,384h1v1h-1zM876,355h1v1h-1zM876,327h1v1h-1zM876,298h1v1h-1zM876,270h1v1h-1zM876,241h1v1h-1zM876,212h1v1h-1zM876,184h1v1h-1zM904,727h1v1h-1zM904,698h1v1h-1zM904,670h1v1h-1zM904,641h1v1h-1zM904,613h1v1h-1zM904,584h1v1h-1zM904,555h1v1h-1zM904,527h1v1h-1zM904,498h1v1h-1zM904,470h1v1h-1zM904,441h1v1h-1zM904,413h1v1h-1zM904,384h1v1h-1zM904,355h1v1h-1zM904,327h1v1h-1zM904,298h1v1h-1zM904,270h1v1h-1zM904,241h1v1h-1zM904,212h1v1h-1zM904,184h1v1h-1zM933,727h1v1h-1zM933,698h1v1h-1zM933,670h1v1h-1zM933,641h1v1h-1zM933,613h1v1h-1zM933,584h1v1h-1zM933,555h1v1h-1zM933,527h1v1h-1zM933,498h1v1h-1zM933,470h1v1h-1zM933,441h1v1h-1zM933,413h1v1h-1zM933,384h1v1h-1zM933,355h1v1h-1zM933,327h1v1h-1zM933,298h1v1h-1zM933,270h1v1h-1zM933,241h1v1h-1zM933,212h1v1h-1zM933,184h1v1h-1zM961,727h1v1h-1zM961,698h1v1h-1zM961,670h1v1h-1zM961,641h1v1h-1zM961,613h1v1h-1zM961,584h1v1h-1zM961,555h1v1h-1zM961,527h1v1h-1zM961,498h1v1h-1zM961,470h1v1h-1zM961,441h1v1h-1zM961,413h1v1h-1zM961,384h1v1h-1zM961,355h1v1h-1zM961,327h1v1h-1zM961,298h1v1h-1zM961,270h1v1h-1zM961,241h1v1h-1zM961,212h1v1h-1zM961,184h1v1h-1zM990,727h1v1h-1zM990,698h1v1h-1zM990,670h1v1h-1zM990,641h1v1h-1zM990,613h1v1h-1zM990,584h1v1h-1zM990,555h1v1h-1zM990,527h1v1h-1zM990,498h1v1h-1zM990,470h1v1h-1zM990,441h1v1h-1zM990,413h1v1h-1zM990,384h1v1h-1zM990,355h1v1h-1zM990,327h1v1h-1zM990,298h1v1h-1zM990,270h1v1h-1zM990,241h1v1h-1zM990,212h1v1h-1zM990,184h1v1h-1zM1019,727h1v1h-1zM1019,698h1v1h-1zM1019,670h1v1h-1zM1019,641h1v1h-1zM1019,613h1v1h-1zM1019,584h1v1h-1zM1019,555h1v1h-1zM1019,527h1v1h-1zM1019,498h1v1h-1zM1019,470h1v1h-1zM1019,441h1v1h-1zM1019,413h1v1h-1zM1019,384h1v1h-1zM1019,355h1v1h-1zM1019,327h1v1h-1zM1019,298h1v1h-1zM1019,270h1v1h-1zM1019,241h1v1h-1zM1019,212h1v1h-1zM1019,184h1v1h-1zM1047,727h1v1h-1zM1047,698h1v1h-1zM1047,670h1v1h-1zM1047,641h1v1h-1zM1047,613h1v1h-1zM1047,584h1v1h-1zM1047,555h1v1h-1zM1047,527h1v1h-1zM1047,498h1v1h-1zM1047,470h1v1h-1zM1047,441h1v1h-1zM1047,413h1v1h-1zM1047,384h1v1h-1zM1047,355h1v1h-1zM1047,327h1v1h-1zM1047,298h1v1h-1zM1047,270h1v1h-1zM1047,241h1v1h-1zM1047,212h1v1h-1zM1047,184h1v1h-1zM1076,727h1v1h-1zM1076,698h1v1h-1zM1076,670h1v1h-1zM1076,641h1v1h-1zM1076,613h1v1h-1zM1076,584h1v1h-1zM1076,555h1v1h-1zM1076,527h1v1h-1zM1076,498h1v1h-1zM1076,470h1v1h-1zM1076,441h1v1h-1zM1076,413h1v1h-1zM1076,384h1v1h-1zM1076,355h1v1h-1zM1076,327h1v1h-1zM1076,298h1v1h-1zM1076,270h1v1h-1zM1076,241h1v1h-1zM1076,212h1v1h-1zM1076,184h1v1h-1zM1104,727h1v1h-1zM1104,698h1v1h-1zM1104,670h1v1h-1zM1104,641h1v1h-1zM1104,613h1v1h-1zM1104,584h1v1h-1zM1104,555h1v1h-1zM1104,527h1v1h-1zM1104,498h1v1h-1zM1104,470h1v1h-1zM1104,441h1v1h-1zM1104,413h1v1h-1zM1104,384h1v1h-1zM1104,355h1v1h-1zM1104,327h1v1h-1zM1104,298h1v1h-1zM1104,270h1v1h-1zM1104,241h1v1h-1zM1104,212h1v1h-1zM1104,184h1v1h-1zM1133,727h1v1h-1zM1133,698h1v1h-1zM1133,670h1v1h-1zM1133,641h1v1h-1zM1133,613h1v1h-1zM1133,584h1v1h-1zM1133,555h1v1h-1zM1133,527h1v1h-1zM1133,498h1v1h-1zM1133,470h1v1h-1zM1133,441h1v1h-1zM1133,413h1v1h-1zM1133,384h1v1h-1zM1133,355h1v1h-1zM1133,327h1v1h-1zM1133,298h1v1h-1zM1133,270h1v1h-1zM1133,241h1v1h-1zM1133,212h1v1h-1zM1133,184h1v1h-1z" fill="#444"/>
</g>
</svg>
<!-- DRAWING -->
<svg class="a" style="left:0;top:0" width="1500" height="844" viewBox="0 0 1500 844"><g clip-path="url(#cnv)" fill="none" stroke-linejoin="round" stroke-linecap="round">
<g stroke="#cacaca" stroke-width="1"><polyline points="332.1,290.6 349.9,291.4 351.1,285.1 369.4,287.8 370.5,289.0"/><polyline points="358.2,286.1 360.5,269.5"/><polyline points="332.1,297.7 338.6,298.5 337.4,308.0"/><polyline points="332.7,307.6 389.0,313.3 420.8,316.6 410.3,351.2 400.0,380.0"/><polyline points="345.7,299.7 433.1,309.0 437.5,311.5 440.7,317.1"/><polyline points="346.9,299.7 345.7,308.6"/><polyline points="398.5,346.4 410.3,351.2"/><polyline points="383.8,354.5 408.4,357.8"/><polyline points="398.5,346.4 385.7,380.0 384.2,384.6 395.5,389.4 407.9,355.6"/><polyline points="409.4,355.0 417.0,360.7"/><polyline points="390.8,368.6 402.0,372.8"/><polyline points="383.6,355.0 407.9,356.8 416.2,360.3"/><polyline points="332.1,379.3 380.7,385.2 383.6,355.0"/><polyline points="392.5,397.7 395.5,389.4"/><polyline points="436.9,346.4 450.1,340.3 453.0,335.5 462.5,336.5"/><polyline points="461.5,337.9 460.1,355.0"/><polyline points="466.3,337.9 465.3,355.0"/><polyline points="460.8,341.0 465.8,341.0"/><polyline points="460.6,344.0 465.6,344.0"/><polyline points="460.4,347.0 465.4,347.0"/><polyline points="460.3,350.0 465.3,350.0"/><polyline points="460.2,353.0 465.2,353.0"/><polyline points="484.7,279.5 497.1,280.7 491.8,316.3"/><polyline points="484.1,288.4 494.8,289.6"/><polyline points="482.3,305.6 491.8,306.8"/><polyline points="496.5,270.0 503.1,270.4"/><polyline points="510.8,270.0 510.2,273.0 565.9,280.1"/><polyline points="565.9,286.7 509.6,280.7 507.2,301.5 565.9,308.0"/><polyline points="565.9,313.3 504.8,306.8 503.1,319.2"/><polyline points="472.9,318.0 471.1,334.0 565.9,344.7"/><polyline points="536.2,327.5 565.9,331.1"/><polyline points="536.2,327.5 534.5,341.8"/><polyline points="467.5,337.0 557.6,347.7 557.0,354.8 565.9,356.0"/><polyline points="467.5,333.5 466.3,354.8"/><polyline points="447.4,353.6 484.1,357.7 485.3,360.0"/><polyline points="447.3,354.0 444.5,364.5 442.6,380.0"/><polyline points="348.1,407.1 392.0,411.9"/><polyline points="348.1,407.1 348.1,413.6 379.5,416.6 377.1,442.7 345.1,439.1 348.1,413.6"/><polyline points="354.0,440.3 353.4,446.8 368.2,448.6 368.8,442.1"/><polyline points="377.1,442.7 375.9,451.6 397.3,453.3"/><polyline points="447.0,355.0 447.6,363.3 443.5,364.5 442.3,378.7 450.0,379.9"/><polyline points="434.0,377.5 442.3,378.7"/><polyline points="434.0,377.5 431.0,417.2 450.0,420.2"/><polyline points="424.5,392.3 422.2,416.0 431.0,417.2"/><polyline points="424.5,392.3 431.0,393.0"/><polyline points="411.5,423.7 450.0,429.6 565.9,441.5"/><polyline points="445.0,379.3 476.4,384.0 565.9,393.5"/><polyline points="456.8,355.0 485.3,357.4 481.7,384.0"/><polyline points="445.0,364.5 446.8,363.9 447.4,355.0"/><polyline points="517.9,361.5 554.6,366.3 551.0,392.3"/><polyline points="517.9,361.5 516.1,372.8 513.7,373.4 511.9,387.0"/><polyline points="503.1,386.4 500.1,426.1 518.0,428.0 518.5,426.0 541.0,429.6 545.7,392.3"/><polyline points="476.4,384.0 475.2,394.1 471.1,421.4 445.0,419.6"/><polyline points="446.2,420.0 445.6,426.0"/><polyline points="476.4,389.4 491.2,390.5 490.0,399.4 484.7,398.8 480.5,430.8 545.7,439.1"/><polyline points="475.2,394.1 480.5,394.7 477.0,430.8"/><polyline points="445.0,426.1 477.0,430.8"/><polyline points="494.8,400.6 500.1,401.2 498.9,413.0 500.7,414.2"/><polyline points="494.8,400.6 491.2,424.3 500.1,426.1"/><polyline points="545.7,394.1 560.5,398.8 559.3,407.1 554.0,406.5 549.9,439.1"/><polyline points="545.1,401.8 550.5,403.0 545.7,439.1"/><polyline points="445.0,432.6 565.9,446.8"/><polyline points="564.7,408.3 561.7,432.6 565.9,433.2"/><polyline points="332.1,487.3 385.4,496.2"/><polyline points="332.1,498.6 383.0,507.8"/><polyline points="389.0,509.8 405.0,515.0 422.2,522.3 436.4,535.3 444.7,550.0 449.5,560.0"/><polyline points="376.0,450.6 378.3,451.8 397.3,453.6"/><polyline points="405.6,461.8 421.0,462.4 421.6,466.0 450.0,468.4"/><polyline points="441.7,467.8 440.5,493.2 405.6,491.5"/><polyline points="404.4,493.8 406.8,499.8 425.7,508.6 434.0,511.6 441.1,510.4 450.0,502.1"/><polyline points="425.7,503.9 442.3,503.9 441.8,510.0"/><polyline points="445.0,505.7 459.2,498.6 477.0,493.2 565.9,471.9"/><polyline points="445.0,467.2 486.5,469.5 488.8,484.4"/><polyline points="524.4,505.1 548.7,508.1 565.9,510.0"/><polyline points="524.4,505.1 521.4,531.2 557.6,535.3 559.3,523.5 565.9,524.7"/><polyline points="559.0,527.0 565.9,528.0"/><polyline points="543.3,492.1 548.7,508.1"/><polyline points="552.2,503.9 560.5,505.1 559.9,509.8"/><polyline points="520.8,535.3 535.6,536.5 534.5,546.6 519.0,544.2 520.8,535.3"/><polyline points="377.7,618.5 380.1,603.1 411.5,571.7 447.6,568.1 454.5,562.2"/><polyline points="411.5,571.7 408.5,591.8 444.7,596.0 442.3,618.5"/><polyline points="411.5,589.4 439.3,597.7 435.8,616.1 447.0,618.5"/><polyline points="411.5,592.4 406.8,618.5"/><polyline points="407.9,612.0 425.7,615.5 425.7,618.5"/><polyline points="449.4,594.8 445.9,618.5"/><polyline points="445.0,618.5 449.7,594.8 455.0,586.0 460.4,581.1 468.7,582.3"/><polyline points="492.4,591.2 492.4,584.1 499.5,578.2 565.9,582.9"/><polyline points="520.8,545.0 533.9,546.2"/><polyline points="571.0,606.0 572.0,614.7 578.7,617.3 583.0,616.0 584.0,606.0"/><polyline points="587.0,606.0 587.5,617.5 608.0,618.7"/><polyline points="667.5,606.0 666.8,617.5"/><polyline points="671.5,606.0 670.8,617.5"/><polyline points="696.0,606.0 698.0,613.0 702.0,615.0 707.0,612.0 708.0,606.0"/><polyline points="730.7,606.7 724.0,617.3"/><polyline points="733.5,606.7 727.0,617.3"/><polyline points="760.0,606.7 758.7,617.3"/><polyline points="777.3,606.7 776.5,617.3"/><polyline points="884.0,617.3 890.0,616.5 898.7,618.7"/></g>
<g stroke="#0cc4d0" stroke-width="1.05"><polyline points="372.3,269.5 369.4,294.2 450.1,302.0"/><polyline points="467.5,269.5 450.1,301.4 440.7,317.1 417.9,356.9 412.7,369.2 407.9,384.6 403.8,400.0 402.6,412.5 397.3,455.0 393.1,490.3 391.4,494.4 385.4,496.8"/><polyline points="565.9,326.6 494.2,318.0 480.0,315.2 458.0,315.1 452.1,318.6 450.1,320.9 436.9,344.5 421.7,374.9 416.2,390.5 412.7,408.3 410.3,428.5 406.8,455.0 404.4,493.8 409.1,498.6 438.7,498.0 445.0,496.2 465.1,489.7 565.9,466.0"/><polyline points="485.3,269.5 479.4,315.7"/><polyline points="332.7,390.3 392.5,397.7 403.2,399.4"/><polyline points="392.5,397.7 392.0,411.9 402.6,412.8"/><polyline points="410.3,431.4 450.0,435.6 565.9,448.6"/><polyline points="332.1,489.1 385.4,496.8 407.9,498.0"/><polyline points="332.1,499.8 383.0,508.6"/><polyline points="389.0,510.4 405.0,515.5 419.8,523.5 435.0,535.0 441.1,545.0 445.0,549.1 494.8,619.0"/><polyline points="400.2,514.0 401.4,550.0 402.0,618.5"/><polyline points="419.8,498.6 445.0,524.6 456.3,537.0"/><polyline points="565.9,486.7 477.0,507.5 460.4,516.4 455.1,527.0 456.3,537.7 464.0,550.0 512.0,619.0"/><polyline points="476.4,568.1 565.9,573.4"/><polyline points="692.0,606.7 689.9,617.3"/><polyline points="785.3,606.7 783.5,617.3"/><polyline points="870.7,606.7 868.8,617.3"/></g>
<circle cx="453" cy="314" r="1.6" stroke="#bbb" stroke-width=".8"/>
<circle cx="389.5" cy="508.5" r="1.6" stroke="#bbb" stroke-width=".8"/>
<g fill="#c02a2a" font-family="Liberation Sans" stroke="none">
<text x="0" y="0" transform="translate(420.5,364.5) rotate(-58.8)" font-size="9.6" textLength="57" lengthAdjust="spacingAndGlyphs">Exercitation</text>
<text x="0" y="0" transform="translate(455.6,320.2) rotate(0)" font-size="8.9" textLength="38.2" lengthAdjust="spacingAndGlyphs">52563284</text>
<text x="0" y="0" transform="translate(390.2,409.4) rotate(0)" font-size="8.9" textLength="18" lengthAdjust="spacingAndGlyphs">1580</text>
<text x="0" y="0" transform="translate(400,430) rotate(90)" font-size="8.9" textLength="25" lengthAdjust="spacingAndGlyphs">4E3906</text>
<text x="0" y="0" transform="translate(349.3,465) rotate(0)" font-size="8.9" textLength="19" lengthAdjust="spacingAndGlyphs">2586</text>
<text x="0" y="0" transform="translate(386,517.3) rotate(0)" font-size="8.9" textLength="37.3" lengthAdjust="spacingAndGlyphs">52562236</text>
<text x="0" y="0" transform="translate(449.1,459.1) rotate(0)" font-size="8.9" textLength="16.6" lengthAdjust="spacingAndGlyphs">1589</text>
<text x="0" y="0" transform="translate(489.4,545) rotate(0)" font-size="8.9" textLength="16.6" lengthAdjust="spacingAndGlyphs">1703</text>
<text x="0" y="0" transform="translate(465.7,617.5) rotate(0)" font-size="8.9" textLength="16" lengthAdjust="spacingAndGlyphs">1883</text>
<text x="0" y="0" transform="translate(549.9,609.2) rotate(0)" font-size="8.9" textLength="13.6" lengthAdjust="spacingAndGlyphs">555</text>
<text x="0" y="0" transform="translate(471.5,578.5) rotate(54)" font-size="9.6" textLength="65" lengthAdjust="spacingAndGlyphs">Minim veniam</text>
</g>
<g fill="#0000c8" stroke="#7a7aa8" stroke-width=".7"><rect x="430.4" y="336.1" width="6.4" height="6.4"/><rect x="452.6" y="318.6" width="6.4" height="6.4"/><rect x="395.3" y="402.5" width="6.4" height="6.4"/><rect x="400.6" y="438.9" width="6.4" height="6.4"/><rect x="355.6" y="458.6" width="6.4" height="6.4"/><rect x="382.2" y="507.0" width="6.4" height="6.4"/><rect x="453.6" y="452.1" width="6.4" height="6.4"/><rect x="493.9" y="538.0" width="6.4" height="6.4"/><rect x="489.2" y="600.4" width="6.4" height="6.4"/><rect x="470.2" y="611.1" width="6.4" height="6.4"/><rect x="553.8" y="602.2" width="6.4" height="6.4"/></g>
</g></svg>
<!-- /DRAWING -->
<!-- TOOLBAR ICONS -->
<svg class="a" style="left:0;top:0" width="1500" height="122" viewBox="0 0 1500 122">
<defs>
<radialGradient id="glow"><stop offset="0" stop-color="#fff"/><stop offset=".35" stop-color="#f4f000"/><stop offset=".7" stop-color="#e8e41a" stop-opacity=".8"/><stop offset="1" stop-color="#e8e41a" stop-opacity="0"/></radialGradient>
<linearGradient id="grn" x1="0" y1="0" x2="1" y2="1"><stop offset="0" stop-color="#9ee08a"/><stop offset="1" stop-color="#2c9c40"/></linearGradient>
<linearGradient id="lens" x1="0" y1="0" x2="0" y2="1"><stop offset="0" stop-color="#a9c6ee"/><stop offset=".48" stop-color="#86ade4"/><stop offset=".52" stop-color="#5f93dc"/><stop offset="1" stop-color="#7fa9e4"/></linearGradient>
<linearGradient id="fold" x1="0" y1="0" x2="0" y2="1"><stop offset="0" stop-color="#86afe0"/><stop offset="1" stop-color="#5a8fd0"/></linearGradient>
<linearGradient id="flop" x1="0" y1="0" x2="1" y2="0"><stop offset="0" stop-color="#7fb6ff"/><stop offset=".5" stop-color="#3b86f0"/><stop offset="1" stop-color="#1e6ef0"/></linearGradient>
<g id="floppy">
<rect x="202.5" y="48.3" width="24" height="25" rx="3" fill="url(#flop)" stroke="#2020a0" stroke-width="1.3"/>
<rect x="205.8" y="49.4" width="18.2" height="11.4" fill="#f2f4ff"/>
<rect x="207.8" y="63" width="12" height="10" fill="#dcdce4"/>
<rect x="209.8" y="65" width="2" height="4" fill="#1b3fd8"/>
</g>
<g id="zlens">
<line x1="6" y1="6" x2="15" y2="15" stroke="#444" stroke-width="4.2" stroke-linecap="round"/>
<line x1="6" y1="6" x2="14.6" y2="14.6" stroke="#8a8a8a" stroke-width="2.2" stroke-linecap="round"/>
<circle cx="0" cy="0" r="11.2" fill="#f2f2f2" stroke="#b4b4b4" stroke-width="1"/>
<circle cx="0" cy="0" r="9" fill="url(#lens)" stroke="#7d9cc8" stroke-width=".8"/>
</g>
</defs>
<!-- handles -->
<g fill="#9a9a9a">
<rect x="7" y="47" width="2" height="2"/><rect x="7" y="53" width="2" height="2"/><rect x="7" y="59" width="2" height="2"/><rect x="7" y="65" width="2" height="2"/><rect x="7" y="71" width="2" height="2"/>
<rect x="87" y="47" width="2" height="2"/><rect x="87" y="53" width="2" height="2"/><rect x="87" y="59" width="2" height="2"/><rect x="87" y="65" width="2" height="2"/><rect x="87" y="71" width="2" height="2"/>
<rect x="402" y="47" width="2" height="2"/><rect x="402" y="53" width="2" height="2"/><rect x="402" y="59" width="2" height="2"/><rect x="402" y="65" width="2" height="2"/><rect x="402" y="71" width="2" height="2"/>
<rect x="707" y="47" width="2" height="2"/><rect x="707" y="53" width="2" height="2"/><rect x="707" y="59" width="2" height="2"/><rect x="707" y="65" width="2" height="2"/><rect x="707" y="71" width="2" height="2"/>
<rect x="7" y="91" width="2" height="2"/><rect x="7" y="97" width="2" height="2"/><rect x="7" y="103" width="2" height="2"/><rect x="7" y="109" width="2" height="2"/>
</g>
<!-- separators -->
<g stroke="#555" stroke-width="1" stroke-dasharray="1 2">
<line x1="186.5" y1="41" x2="186.5" y2="82"/>
<line x1="288.5" y1="41" x2="288.5" y2="82"/>
<line x1="344.5" y1="41" x2="344.5" y2="82"/>
<line x1="501.5" y1="41" x2="501.5" y2="82"/>
<line x1="557.5" y1="41" x2="557.5" y2="82"/>
<line x1="853.5" y1="41" x2="853.5" y2="82"/>
<line x1="910.5" y1="41" x2="910.5" y2="82"/>
<line x1="67.5" y1="86" x2="67.5" y2="121"/>
</g>
<!-- cursor -->
<path d="M27.6,50.6 L27.6,66.7 L31.6,63 L35.5,70.9 L37.6,69.6 L34.8,62 L38.6,61.6 Z" fill="#fff" stroke="#444" stroke-width="1.2" stroke-linejoin="round"/>
<!-- new -->
<rect x="100.5" y="47.5" width="24" height="27.5" rx="1" fill="#f6f6f6" stroke="#8a8a8a" stroke-width="1"/>
<rect x="101" y="74" width="23" height="1.5" fill="#777"/>
<circle cx="121" cy="52.6" r="7" fill="url(#glow)"/>
<!-- open -->
<path d="M143.5,49.5 L151,49.5 L149,72.5 L146,72.5 Z" fill="#9a9a9a" stroke="#666" stroke-width=".8"/>
<path d="M150.5,47.5 L172,47.5 L170,58.5 L147.5,70 Z" fill="#f4f4f4" stroke="#777" stroke-width=".9"/>
<rect x="152" y="50" width="17" height="2" fill="#bdbdbd"/><rect x="151.5" y="53.5" width="17" height="2.5" fill="#b0b0b0"/>
<path d="M150,58.2 L174.8,58.2 L171,72.6 L146,72.6 Z" fill="url(#fold)" stroke="#3f77c0" stroke-width=".8"/>
<!-- save -->
<use href="#floppy"/>
<use href="#floppy" x="46"/>
<g transform="translate(258.5,66) rotate(-47)">
<rect x="3" y="-2.6" width="20" height="5.2" fill="#ffb000" stroke="#a03010" stroke-width=".9"/>
<rect x="3" y="-1" width="20" height="1.2" fill="#ffe080"/>
<path d="M3,-2.6 L-1,0 L3,2.6 Z" fill="#f0d8a0" stroke="#a03010" stroke-width=".8"/>
<rect x="20" y="-2.6" width="3.5" height="5.2" fill="#e03010"/>
</g>
<!-- svg -->
<g stroke="#000" stroke-width="4.2" stroke-linecap="round"><line x1="317" y1="51.8" x2="317" y2="59"/><line x1="311.3" y1="54.4" x2="315" y2="59"/><line x1="322.7" y1="54.4" x2="319" y2="59"/><line x1="308" y1="58.4" x2="312" y2="59.5"/><line x1="326" y1="58.4" x2="322" y2="59.5"/></g>
<g fill="#000"><circle cx="317" cy="51.6" r="3.1"/><circle cx="311.2" cy="54.2" r="3.1"/><circle cx="322.8" cy="54.2" r="3.1"/></g>
<rect x="305.1" y="58.3" width="23.7" height="14.4" rx="2.6" fill="#000"/>
<g stroke="#f7a928" stroke-width="2.5" stroke-linecap="round"><line x1="317" y1="51.8" x2="317" y2="58.8"/><line x1="311.3" y1="54.4" x2="315.5" y2="58.8"/><line x1="322.7" y1="54.4" x2="318.5" y2="58.8"/></g>
<g fill="#f7a928"><circle cx="317" cy="51.6" r="2.1"/><circle cx="311.2" cy="54.2" r="2.1"/><circle cx="322.8" cy="54.2" r="2.1"/></g>
<path d="M307.2,59.6 Q310,57.6 314,58.6 L320,58.6 Q324,57.6 326.8,59.6 Z" fill="#f7a928"/>
<text x="317" y="71" text-anchor="middle" font-family="Liberation Sans" font-weight="bold" font-size="12.8" fill="#fff" textLength="19" lengthAdjust="spacingAndGlyphs">SVG</text>
<!-- print preview -->
<defs><linearGradient id="prt" x1="0" y1="0" x2="0" y2="1"><stop offset="0" stop-color="#f4f4f4"/><stop offset=".6" stop-color="#e2e2e2"/><stop offset="1" stop-color="#bdbdbd"/></linearGradient></defs>
<rect x="363.3" y="47.3" width="19.2" height="14" rx="1" fill="#ececec" stroke="#9a9a9a" stroke-width=".9"/>
<rect x="372" y="50" width="8" height="1.4" fill="#cfcfcf"/><rect x="372" y="53" width="8" height="1.4" fill="#cfcfcf"/>
<rect x="359.4" y="58.5" width="27.2" height="14.2" rx="3" fill="url(#prt)" stroke="#8e8e8e" stroke-width="1"/>
<rect x="361" y="61" width="24" height="1.3" fill="#fff" opacity=".8"/>
<circle cx="362.6" cy="63.4" r=".8" fill="#555"/>
<ellipse cx="373" cy="73.6" rx="12" ry="1.3" fill="#888" opacity=".35"/>
<line x1="371.5" y1="59.5" x2="380.8" y2="67.5" stroke="#6a6a6a" stroke-width="3.2" stroke-linecap="round"/>
<line x1="372.5" y1="60.3" x2="380.3" y2="67" stroke="#b8b8b8" stroke-width="1.4" stroke-linecap="round"/>
<circle cx="368.5" cy="55.8" r="6.6" fill="#f6f6f6" stroke="#b0b0b0" stroke-width=".8"/>
<circle cx="368.5" cy="55.8" r="5.2" fill="url(#lens)" stroke="#3d6fc0" stroke-width="1"/>
<ellipse cx="367.5" cy="53.8" rx="3.2" ry="2" fill="#fff" opacity=".5"/>
<!-- undo / redo -->
<path id="undo" d="M413.7,52.5 L417.8,57.2 C421,53 426,48.9 431,48.9 C437.5,48.9 442,53.5 442,59.5 C442,66 436,71.5 427,72.5 L426.5,71.8 C433,69 437.5,65.5 437.5,60.5 C437.5,57 435,55.2 432.5,55.2 C429,55.2 424,58.5 421.8,61.5 L426.9,66.6 L413.7,66.6 Z" fill="url(#grn)" stroke="#1f8a3a" stroke-width="1"/>
<g opacity=".5"><use href="#undo" transform="matrix(-1,0,0,1,901.8,0)"/></g>
<!-- eraser -->
<ellipse cx="530" cy="72" rx="12" ry="1.6" fill="#bbb" opacity=".6"/>
<g transform="translate(521.4,69.3) rotate(-45)">
<rect x="0" y="-4.8" width="26" height="9.6" fill="#d01818" stroke="#7a1010" stroke-width=".6"/>
<rect x="0" y="-1.3" width="26" height="2.6" fill="#fff"/>
<rect x="-1" y="-4.8" width="7" height="9.6" fill="#f0f0f0" stroke="#777" stroke-width=".6"/>
<rect x="24" y="-4.8" width="2.2" height="9.6" fill="#555"/>
</g>
<!-- scissors -->
<path d="M585.3,47.3 L589,46 L588.6,61 L586.5,63 Z" fill="#eee" stroke="#666" stroke-width=".8"/>
<path d="M589,61 L599.6,52.2 L600.5,55 L590,62.5 Z" fill="#eee" stroke="#666" stroke-width=".8"/>
<ellipse cx="577.3" cy="62.7" rx="5" ry="3" transform="rotate(-18 577.3 62.7)" fill="none" stroke="#e01f1f" stroke-width="2"/>
<ellipse cx="588.3" cy="69.7" rx="3" ry="5" transform="rotate(-8 588.3 69.7)" fill="none" stroke="#e01f1f" stroke-width="2"/>
<line x1="581" y1="62" x2="587" y2="63" stroke="#e01f1f" stroke-width="2"/>
<path d="M572.6,72.3 h5.6 M575.4,69.5 v5.6" stroke="#000" stroke-width="1.2"/>
<!-- copy -->
<rect x="617.4" y="45.6" width="21" height="24.5" rx="1.5" fill="#f6f6f6" stroke="#bbb" stroke-width=".8"/>
<g stroke="#cfcfcf" stroke-width="1"><line x1="621" y1="52.5" x2="626" y2="52.5"/><line x1="621" y1="55" x2="626" y2="55"/><line x1="621" y1="57.5" x2="626" y2="57.5"/><line x1="621" y1="60" x2="626" y2="60"/><line x1="621" y1="62.5" x2="626" y2="62.5"/></g>
<path d="M625.6,52.6 q0,-1.3 1.3,-1.3 h18.6 q1,0 1,1 v17.2 l-6,6.5 h-13.6 q-1.3,0 -1.3,-1.3 Z" fill="#f7f7f7" stroke="#888" stroke-width=".9"/>
<path d="M640.5,76 l0,-5 q0,-1 1,-1 h5" fill="#d0d0d0" stroke="#888" stroke-width=".8"/>
<g stroke="#c9c9c9" stroke-width="1.1"><line x1="630" y1="58.3" x2="643.5" y2="58.3"/><line x1="630" y1="61" x2="643" y2="61"/><line x1="630" y1="63.6" x2="641.5" y2="63.6"/><line x1="630" y1="66.3" x2="643.5" y2="66.3"/></g>
<path d="M618.6,71.5 h5.6 M621.4,68.7 v5.6" stroke="#000" stroke-width="1.2"/>
<!-- paste -->
<rect x="664.6" y="47.8" width="26.2" height="27.4" rx="1.5" fill="#d08a20" stroke="#9a6010" stroke-width=".8"/>
<path d="M668.2,49.3 h19.8 v16.6 l-6,6.4 h-13.8 Z" fill="#fbfbfb"/>
<path d="M682,72.3 l0,-5.4 q0,-1 1,-1 h5" fill="#bbb" stroke="#888" stroke-width=".6"/>
<rect x="671.2" y="47" width="13.4" height="5.6" rx="1.5" fill="#a8a89a" stroke="#6a6a60" stroke-width=".8"/>
<rect x="674.5" y="45" width="7" height="2.5" fill="#a8a89a" stroke="#6a6a60" stroke-width=".7"/>
<g stroke="#c9c9c9" stroke-width="1.1"><line x1="671" y1="55.6" x2="685" y2="55.6"/><line x1="671" y1="58.3" x2="684.5" y2="58.3"/><line x1="671" y1="61" x2="683" y2="61"/><line x1="671" y1="63.6" x2="685" y2="63.6"/><line x1="671" y1="66.3" x2="680" y2="66.3"/></g>
<!-- pencil red line -->
<line x1="722" y1="71.4" x2="744" y2="71.4" stroke="#f01010" stroke-width="1"/>
<g transform="translate(723,70) rotate(-45)">
<rect x="4" y="-2.8" width="22" height="5.6" rx="1" fill="#d83020" stroke="#7a3010" stroke-width=".8"/>
<rect x="4" y="-1.4" width="22" height="1.4" fill="#f07060"/>
<path d="M4,-2.8 L-0.5,0 L4,2.8 Z" fill="#e8c090" stroke="#7a3010" stroke-width=".7"/>
<rect x="21" y="-2.8" width="1.6" height="5.6" fill="#ddd"/>
</g>
<!-- ortho -->
<rect x="764.6" y="50.6" width="29" height="21.8" fill="#00007a" stroke="#111" stroke-width="1"/>
<path d="M768.5,69 L790,53.5 L790,69 Z" fill="none" stroke="#ddd" stroke-width="1.3" stroke-dasharray="2.2 1.2"/>
<!-- active bg -->
<rect x="804.3" y="40.3" width="42.5" height="42.4" rx="4" fill="#b7b7b7"/>
<rect x="861.2" y="40.3" width="42.5" height="42.4" rx="4" fill="#b7b7b7"/>
<circle cx="825" cy="60.7" r="12.6" fill="none" stroke="#000" stroke-width="1.7"/>
<line x1="811" y1="74.7" x2="839" y2="47" stroke="#1515f0" stroke-width="1"/>
<g fill="#000">
<rect x="869.5" y="48.5" width="2" height="2"/><rect x="877.5" y="48.5" width="2" height="2"/><rect x="885.5" y="48.5" width="2" height="2"/><rect x="893.5" y="48.5" width="2" height="2"/>
<rect x="869.5" y="56.5" width="2" height="2"/><rect x="877.5" y="56.5" width="2" height="2"/><rect x="885.5" y="56.5" width="2" height="2"/><rect x="893.5" y="56.5" width="2" height="2"/>
<rect x="869.5" y="64.5" width="2" height="2"/><rect x="877.5" y="64.5" width="2" height="2"/><rect x="885.5" y="64.5" width="2" height="2"/><rect x="893.5" y="64.5" width="2" height="2"/>
<rect x="869.5" y="72.5" width="2" height="2"/><rect x="877.5" y="72.5" width="2" height="2"/><rect x="885.5" y="72.5" width="2" height="2"/><rect x="893.5" y="72.5" width="2" height="2"/>
</g>
<!-- zoom -->
<use href="#zlens" x="935.3" y="56.7"/>
<path d="M930,56.7 h10.6 M935.3,51.4 v10.6" stroke="#fff" stroke-width="3"/>
<use href="#zlens" x="980.8" y="56.7"/>
<path d="M975.5,56.7 h10.6" stroke="#fff" stroke-width="3"/>
<use href="#zlens" x="1027" y="56.7"/>
<path d="M1021,54 v-3 h3 M1030,50.7 h3 v3 M1033,59.4 v3 h-3 M1024,62.4 h-3 v-3" fill="none" stroke="#fff" stroke-width="1.8"/>
<rect x="1023.5" y="53.5" width="7" height="6.5" fill="#a8c4ea"/>
<use href="#zlens" x="1073.3" y="56.7"/>
<path d="M1067.3,54 v-3 h3 M1076.3,50.7 h3 v3 M1079.3,59.4 v3 h-3 M1070.3,62.4 h-3 v-3" fill="none" stroke="#e01010" stroke-width="1.8"/>
<rect x="1069.8" y="53.5" width="7" height="6.5" fill="#a8c4ea"/>
<use href="#zlens" x="1119" y="56.7"/>
<path d="M1113.5,56.7 L1118.5,52.2 V54.6 H1124.5 V58.8 H1118.5 V61.2 Z" fill="#fff"/>
<rect x="1153.3" y="46" width="27" height="17.4" rx="1.5" fill="#fbfbfb" stroke="#7a9fd4" stroke-width="1"/>
<use href="#zlens" x="1167.4" y="61.8"/>
<use href="#zlens" x="1212" y="56.7"/>
<path d="M1212,46 v21.4 M1201.3,56.7 h21.4" stroke="#fff" stroke-width="2"/>
<path d="M1212,45 l-2.8,3.6 h5.6 Z M1212,68.4 l-2.8,-3.6 h5.6 Z M1200.3,56.7 l3.6,-2.8 v5.6 Z M1223.7,56.7 l-3.6,-2.8 v5.6 Z" fill="#fff" stroke="#5a85c8" stroke-width=".6"/>
<!-- + button tb2 -->
<rect x="14.8" y="88.2" width="43.4" height="30.6" rx="5" fill="url(#btn)" stroke="#7e7e7e" stroke-width="1.6"/>
<path d="M33.9,92.6 h5.2 v7.5 h7.5 v5.2 h-7.5 v7.5 h-5.2 v-7.5 h-7.5 v-5.2 h7.5 Z" fill="#f00" stroke="#400" stroke-width=".8"/>
<linearGradient id="btn" x1="0" y1="0" x2="0" y2="1"><stop offset="0" stop-color="#f0f0f0"/><stop offset=".45" stop-color="#dedede"/><stop offset=".55" stop-color="#f4f4f4"/><stop offset="1" stop-color="#e4e4e4"/></linearGradient>
</svg>
<!-- TOOLBOX ICONS -->
<svg class="a" style="left:0;top:0" width="72" height="844" viewBox="0 0 72 844">
<defs><linearGradient id="tbb" x1="0" y1="0" x2="0" y2="1"><stop offset="0" stop-color="#f6f6f6"/><stop offset=".12" stop-color="#e6e6e6"/><stop offset=".35" stop-color="#e9e9e9"/><stop offset="1" stop-color="#f5f5f5"/></linearGradient></defs>
<rect x="7" y="131" width="2" height="2" fill="#aaa"/>
<rect x="13" y="131" width="2" height="2" fill="#aaa"/>
<rect x="19" y="131" width="2" height="2" fill="#aaa"/>
<rect x="25" y="131" width="2" height="2" fill="#aaa"/>
<rect x="31" y="131" width="2" height="2" fill="#aaa"/>
<rect x="37" y="131" width="2" height="2" fill="#aaa"/>
<rect x="43" y="131" width="2" height="2" fill="#aaa"/>
<rect x="49" y="131" width="2" height="2" fill="#aaa"/>
<rect x="55" y="131" width="2" height="2" fill="#aaa"/>
<rect x="61" y="131" width="2" height="2" fill="#aaa"/>
<rect x="1.5" y="137.5" width="34" height="34" fill="url(#tbb)" stroke="#9a9a9a" stroke-width="1"/>
<path d="M26.5,166.7 L31,162.3 L31,166.7 Z" fill="#000"/>
<rect x="36.5" y="137.5" width="34" height="34" fill="url(#tbb)" stroke="#9a9a9a" stroke-width="1"/>
<path d="M61.5,166.7 L66,162.3 L66,166.7 Z" fill="#000"/>
<rect x="1.5" y="172.5" width="34" height="34" fill="url(#tbb)" stroke="#9a9a9a" stroke-width="1"/>
<path d="M26.5,201.7 L31,197.3 L31,201.7 Z" fill="#000"/>
<rect x="36.5" y="172.5" width="34" height="34" fill="url(#tbb)" stroke="#9a9a9a" stroke-width="1"/>
<path d="M61.5,201.7 L66,197.3 L66,201.7 Z" fill="#000"/>
<rect x="1.5" y="207.5" width="34" height="34" fill="url(#tbb)" stroke="#9a9a9a" stroke-width="1"/>
<path d="M26.5,236.7 L31,232.3 L31,236.7 Z" fill="#000"/>
<rect x="36.5" y="207.5" width="34" height="34" fill="url(#tbb)" stroke="#9a9a9a" stroke-width="1"/>
<path d="M61.5,236.7 L66,232.3 L66,236.7 Z" fill="#000"/>
<rect x="1.5" y="242.5" width="34" height="34" fill="url(#tbb)" stroke="#9a9a9a" stroke-width="1"/>
<path d="M26.5,271.7 L31,267.3 L31,271.7 Z" fill="#000"/>
<rect x="36.5" y="242.5" width="34" height="34" fill="url(#tbb)" stroke="#9a9a9a" stroke-width="1"/>
<path d="M61.5,271.7 L66,267.3 L66,271.7 Z" fill="#000"/>
<rect x="1.5" y="277.5" width="34" height="34" fill="url(#tbb)" stroke="#9a9a9a" stroke-width="1"/>
<path d="M26.5,306.7 L31,302.3 L31,306.7 Z" fill="#000"/>
<rect x="1.5" y="320.5" width="34" height="34" fill="url(#tbb)" stroke="#9a9a9a" stroke-width="1"/>
<rect x="36.5" y="320.5" width="34" height="34" fill="url(#tbb)" stroke="#9a9a9a" stroke-width="1"/>
<path d="M61.5,349.7 L66,345.3 L66,349.7 Z" fill="#000"/>
<rect x="1.5" y="355.5" width="34" height="34" fill="url(#tbb)" stroke="#9a9a9a" stroke-width="1"/>
<rect x="1.5" y="398.5" width="34" height="34" fill="url(#tbb)" stroke="#9a9a9a" stroke-width="1"/>
<path d="M26.5,427.7 L31,423.3 L31,427.7 Z" fill="#000"/>
<rect x="36.5" y="398.5" width="34" height="34" fill="url(#tbb)" stroke="#9a9a9a" stroke-width="1"/>
<rect x="1.5" y="433.5" width="34" height="34" fill="url(#tbb)" stroke="#9a9a9a" stroke-width="1"/>
<rect x="36.5" y="433.5" width="34" height="34" fill="url(#tbb)" stroke="#9a9a9a" stroke-width="1"/>
<path d="M61.5,462.7 L66,458.3 L66,462.7 Z" fill="#000"/>
<rect x="1.5" y="476.5" width="34" height="34" fill="url(#tbb)" stroke="#9a9a9a" stroke-width="1"/>
<path d="M26.5,505.7 L31,501.3 L31,505.7 Z" fill="#000"/>

<g fill="none" stroke="#111" stroke-width="1.2">
<path d="M8,146.5 h6.6 M11.3,143.2 v6.6 M22,155.5 h6.6 M25.3,152.2 v6.6 M9,161.5 h6.6 M12.3,158.2 v6.6"/>
</g>
<line x1="41.8" y1="159.6" x2="64.8" y2="149.2" stroke="#222" stroke-width="1.2"/>
<path d="M7.8,197.7 A19.5,19.5 0 0 1 27,178.8" fill="none" stroke="#333" stroke-width="1.2"/>
<circle cx="52.5" cy="188.3" r="9.8" fill="none" stroke="#333" stroke-width="1.1"/>
<ellipse cx="18.2" cy="223.7" rx="13.2" ry="5.2" transform="rotate(-40 18.2 223.7)" fill="none" stroke="#333" stroke-width="1.1"/>
<path d="M42.2,215.5 C41,218 45,234 48.5,233.5 C52,233 55.5,218 60.5,215 C64.5,213 65.5,226 63.5,226.5 C60,227.5 46,211 42.2,215.5 Z" fill="none" stroke="#333" stroke-width="1.1"/>
<path d="M13.8,253.8 A4.5,4.55 0 0 0 13.8,262.9 L27.6,262.9" fill="none" stroke="#444" stroke-width="1.2"/>
<path d="M41,253.2 L44.3,247.3 L51,247.3 L54.3,253.2 L51,259.1 L44.3,259.1 Z" fill="none" stroke="#333" stroke-width="1"/>
<path d="M60.4,251.4 L55.6,260.3 L65.8,260.3 Z" fill="none" stroke="#333" stroke-width="1"/>
<rect x="41" y="263.6" width="14.6" height="7.1" rx=".6" fill="none" stroke="#333" stroke-width="1"/>
<defs><pattern id="hp" width="2.6" height="2.6" patternUnits="userSpaceOnUse" patternTransform="rotate(45)"><rect width=".9" height="2.6" fill="#777"/></pattern></defs>
<path d="M7.3,293.8 L13.3,287.1 L28.4,287.1 L28.4,301.3 L7.3,301.3 Z" fill="url(#hp)" stroke="#333" stroke-width="1"/>
<circle cx="20.4" cy="294.7" r="2.9" fill="#eee" stroke="#333" stroke-width="1"/>
<text x="18" y="346.8" text-anchor="middle" font-family="Liberation Serif" font-size="27" fill="#111">A</text>
<path d="M43.6,329 v15.7 M61.3,329 v15.7 M44,331.3 h17" fill="none" stroke="#333" stroke-width="1.2"/>
<path d="M44,331.3 l3.2,-1.8 v3.6 Z M61,331.3 l-3.2,-1.8 v3.6 Z" fill="#222"/>
<rect x="7.5" y="363.8" width="21.4" height="16.6" fill="#fff" stroke="#333" stroke-width="1.3"/>
<path d="M10,377.5 L10,374 L13,371 L15.5,373.5 L20,368.5 L26.2,375 L26.2,377.5 Z" fill="#000"/>
<circle cx="24.6" cy="367.3" r="1.6" fill="#000"/>
<path d="M5.3,408.3 L5.3,427.4 L24.4,427.4 Z" fill="#fff" stroke="#222" stroke-width="1.1"/>
<path d="M9.3,417.7 L9.3,423.7 L15.3,423.7 Z" fill="none" stroke="#222" stroke-width="1"/>
<g transform="translate(20.5,413.5) rotate(-135)"><rect x="2" y="-1.8" width="12" height="3.6" fill="#e03020" stroke="#802010" stroke-width=".6"/><path d="M2,-1.8 L-.5,0 L2,1.8 Z" fill="#d8b080" stroke="#802010" stroke-width=".5"/></g>
<path d="M26.3,402.3 v2.5 M26.3,405 L23.6,420.5 M26.3,405 L28.8,420.5" fill="none" stroke="#222" stroke-width="1.1"/>
<circle cx="26.3" cy="405" r="1.3" fill="#222"/>
<rect x="41" y="411" width="23.7" height="7.8" rx="1" fill="#fff" stroke="#555" stroke-width="1"/>
<path d="M43.5,411.5 v2 M45.5,411.5 v1.5 M47.5,411.5 v1.5 M49.5,411.5 v1.5 M51.5,411.5 v1.5 M53,411.5 v3 M55,411.5 v1.5 M57,411.5 v1.5 M59,411.5 v1.5 M61,411.5 v1.5 M62.5,411.5 v2.5" stroke="#444" stroke-width=".6"/>
<rect x="7.6" y="440.5" width="17.1" height="12.7" fill="#fdf2c8" stroke="#333" stroke-width="1"/>
<circle cx="21.8" cy="451.9" r="6.9" fill="#fdf2c8" stroke="#333" stroke-width="1"/>
<path d="M14.9,451.9 h9.8 v-11.4" fill="none" stroke="#333" stroke-width="1"/>
<circle cx="7.9" cy="453.2" r="1.5" fill="#f33"/>
<line x1="41.8" y1="448.8" x2="58.7" y2="438.6" stroke="#f22" stroke-width="1.2"/>
<path d="M51.1,444.3 L51.1,456 L54,453.4 L56.6,458.3 L58,457.4 L55.6,452.6 L58.6,452.3 Z" fill="#fff" stroke="#555" stroke-width=".8"/>
<path d="M20.1,482.4 L28.4,487.5 L28.4,496.4 L16,503.2 L8,498.1 L8,489.3 Z M8,489.3 L16,493.7 L28.4,487.5 M16,493.7 L16,503.2" fill="none" stroke="#2a2a2a" stroke-width="1.1" stroke-linejoin="round"/>

</svg>
</body></html>
